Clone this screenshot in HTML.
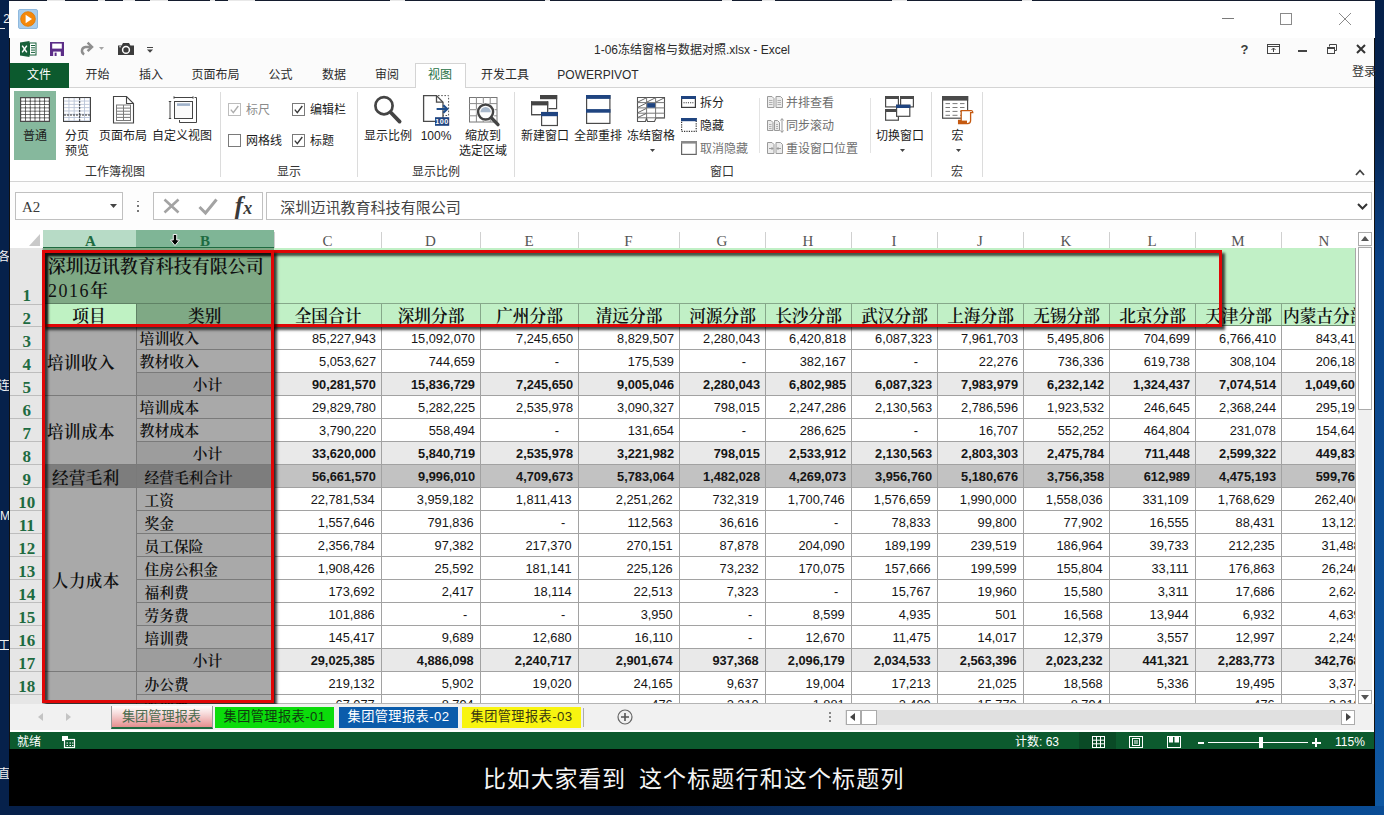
<!DOCTYPE html><html lang="zh-CN"><head><meta charset="utf-8"><title>Excel</title><style>
*{box-sizing:border-box;margin:0;padding:0}
html,body{width:1384px;height:815px;overflow:hidden}
body{position:relative;background:#07224d;font-family:'Liberation Sans','Noto Sans CJK SC',sans-serif;font-size:12px;color:#222;}
.a{position:absolute}
.t{position:absolute;white-space:nowrap;line-height:1}
.c{transform:translateX(-50%)}
svg{position:absolute;overflow:visible}
</style></head><body>
<div class="a" style="left:0;top:0;width:1384px;height:815px;background:linear-gradient(90deg,#06204a 0%,#06204a 45%,#0a4d96 100%)"></div>
<div class="a" style="left:0;top:0;width:10px;height:815px;background:#06214b"></div>
<div class="a" style="left:1374px;top:0;width:10px;height:806px;background:linear-gradient(180deg,#05204a 0px,#06244f 120px,#0b4286 260px,#0d4d93 500px,#0f58a3 806px)"></div>
<div class="a" style="left:9px;top:0;width:1366px;height:1px;background:#141c2e"></div>
<div class="a" style="left:47px;top:0;width:18px;height:1px;background:#e8e8e8"></div>
<div class="a" style="left:98px;top:0;width:7px;height:1px;background:#e8e8e8"></div>
<div class="a" style="left:123px;top:0;width:12px;height:1px;background:#e8e8e8"></div>
<div class="a" style="left:150px;top:0;width:18px;height:1px;background:#e8e8e8"></div>
<div class="a" style="left:210px;top:0;width:5px;height:1px;background:#e8e8e8"></div>
<div class="a" style="left:228px;top:0;width:27px;height:1px;background:#e8e8e8"></div>
<div class="a" style="left:390px;top:0;width:15px;height:1px;background:#e8e8e8"></div>
<div class="a" style="left:545px;top:0;width:5px;height:1px;background:#e8e8e8"></div>
<div class="a" style="left:722px;top:0;width:10px;height:1px;background:#e8e8e8"></div>
<div class="a" style="left:762px;top:0;width:13px;height:1px;background:#e8e8e8"></div>
<div class="a" style="left:892px;top:0;width:15px;height:1px;background:#e8e8e8"></div>
<div class="a" style="left:1022px;top:0;width:10px;height:1px;background:#e8e8e8"></div>
<div class="a" style="left:0;top:0;width:9px;height:815px;overflow:hidden;color:#f2f2f2;font-size:12px">
<div class="t" style="right:-1px;top:12.5px">2</div>
<div class="t" style="right:-1px;top:251px">各</div>
<div class="t" style="right:-1px;top:380px">连</div>
<div class="t" style="right:-1px;top:509.5px">M</div>
<div class="t" style="right:-1px;top:639.5px">工</div>
<div class="t" style="right:-1px;top:767.5px">直</div>
<div class="a" style="left:0;top:28px;width:5px;height:1px;background:#e8e8e8"></div>
</div>
<div class="a" style="left:9px;top:1px;width:1366px;height:805px;background:#fff"></div>
<div class="a" style="left:9px;top:749px;width:1366px;height:57px;background:#000"></div>
<div class="a" style="left:9px;top:38px;width:1366px;height:711px;background:#111"></div>
<div class="a" id="xl" style="left:10px;top:38px;width:1364px;height:711px;background:#fff;overflow:hidden"></div>
<div class="a" style="left:18px;top:9px;width:20px;height:20px;background:#a9cdec;border:1px solid #8fb9de;border-radius:2px"></div>
<svg style="left:20px;top:11px" width="16" height="16" viewBox="0 0 16 16"><circle cx="8" cy="8" r="7.3" fill="#f5880a"/><circle cx="8" cy="8" r="7.3" fill="none" stroke="#e07800" stroke-width="0.8"/><path d="M5.6 3.8 L12 8 L5.6 12.2Z" fill="#fff"/></svg>
<div class="a" style="left:1222px;top:18px;width:12px;height:1px;background:#7a7a7a;"></div>
<div class="a" style="left:1280px;top:13px;width:12px;height:12px;background:transparent;border:1px solid #8a8a8a"></div>
<svg style="left:1339px;top:13px" width="12" height="12" viewBox="0 0 12 12"><path d="M0 0L12 12M12 0L0 12" stroke="#8a8a8a" stroke-width="1" fill="none"/></svg>
<div class="a" style="left:10px;top:38px;width:1364px;height:50px;background:#fbfbfb;"></div>
<svg style="left:20px;top:41px" width="17" height="16" viewBox="0 0 17 16"><path d="M0 1.6 L9.5 0 V16 L0 14.4Z" fill="#17603a"/><rect x="9.5" y="2" width="6.5" height="12" fill="#fff" stroke="#17603a" stroke-width="1"/><path d="M11 4.5h4M11 6.8h4M11 9.1h4M11 11.4h4" stroke="#17603a" stroke-width="1"/><path d="M2.2 4.6 L6.8 11.4 M6.8 4.6 L2.2 11.4" stroke="#fff" stroke-width="1.5"/></svg>
<svg style="left:50px;top:42px" width="14" height="14" viewBox="0 0 14 14"><path d="M0 0H14V14H0Z" fill="#5b2d87"/><rect x="2.2" y="1.6" width="9.6" height="5" fill="#fff"/><rect x="3.2" y="9.6" width="7.6" height="4.4" fill="#fff"/><rect x="4.6" y="10.6" width="2" height="3.4" fill="#5b2d87"/></svg>
<svg style="left:79px;top:42px" width="15" height="13" viewBox="0 0 15 13"><path d="M11.8 4.9 H6.4 A3.9 3.9 0 0 0 5.2 12.3" fill="none" stroke="#8e8e8e" stroke-width="2.5"/><path d="M8.6 0.6 L13 4.9 L8.6 9.2" fill="none" stroke="#8e8e8e" stroke-width="2.5"/></svg>
<svg style="left:99px;top:47px" width="5" height="3" viewBox="0 0 5 3"><path d="M0 0H5L2.5 3Z" fill="#a5a5a5"/></svg>
<svg style="left:118px;top:43px" width="16" height="12" viewBox="0 0 16 12"><path d="M0 2.4 H3.6 L5 0 H11 L12.4 2.4 H16 V12 H0Z" fill="#3c3c3c"/><circle cx="8" cy="6.9" r="3.4" fill="none" stroke="#fff" stroke-width="1.5"/><rect x="1.3" y="3.3" width="1.6" height="1" fill="#fff"/></svg>
<svg style="left:147px;top:47px" width="6" height="6" viewBox="0 0 6 6"><path d="M0 0.5H6" stroke="#444" stroke-width="1"/><path d="M0 2.5H6L3 5.8Z" fill="#444"/></svg>
<div class="t c" style="left:692px;top:43.5px;font-size:12px;color:#2a2a2a;">1-06冻结窗格与数据对照.xlsx - Excel</div>
<div class="t c" style="left:1244.5px;top:43px;font-size:13px;color:#3b3b3b;font-weight:bold;">?</div>
<svg style="left:1267px;top:44px" width="13" height="10" viewBox="0 0 13 10"><rect x="0.5" y="0.5" width="12" height="9" fill="none" stroke="#444" stroke-width="1"/><path d="M0.5 2.5H12.5" stroke="#444"/><path d="M6.5 8V4M4.5 6L6.5 4L8.5 6" stroke="#444" fill="none"/></svg>
<div class="a" style="left:1298px;top:50px;width:9px;height:2px;background:#444;"></div>
<svg style="left:1327px;top:44px" width="10" height="10" viewBox="0 0 10 10"><path d="M2.5 2.5V0.5H9.5V6.5H7.5" fill="none" stroke="#444"/><rect x="0.5" y="3.5" width="7" height="6" fill="none" stroke="#444"/><path d="M0.5 4.5H7.5" stroke="#444"/></svg>
<svg style="left:1356px;top:44px" width="10" height="10" viewBox="0 0 10 10"><path d="M1 1L9 9M9 1L1 9" stroke="#333" stroke-width="2" fill="none"/></svg>
<div class="t" style="left:1352px;top:66px;font-size:12px;color:#333;">登录</div>
<div class="a" style="left:10px;top:87px;width:1364px;height:1px;background:#d4d4d4;"></div>
<div class="a" style="left:10px;top:63px;width:59px;height:25px;background:#0c5a2e;"></div>
<div class="t c" style="left:39px;top:69px;font-size:12px;color:#fff;">文件</div>
<div class="t c" style="left:97.5px;top:69px;font-size:12px;color:#2b2b2b;">开始</div>
<div class="t c" style="left:151px;top:69px;font-size:12px;color:#2b2b2b;">插入</div>
<div class="t c" style="left:215.5px;top:69px;font-size:12px;color:#2b2b2b;">页面布局</div>
<div class="t c" style="left:280.5px;top:69px;font-size:12px;color:#2b2b2b;">公式</div>
<div class="t c" style="left:334px;top:69px;font-size:12px;color:#2b2b2b;">数据</div>
<div class="t c" style="left:387px;top:69px;font-size:12px;color:#2b2b2b;">审阅</div>
<div class="t c" style="left:505px;top:69px;font-size:12px;color:#2b2b2b;">开发工具</div>
<div class="t c" style="left:598px;top:69px;font-size:12px;color:#2b2b2b;">POWERPIVOT</div>
<div class="a" style="left:414.5px;top:63px;width:51px;height:25px;background:#fff;border:1px solid #d4d4d4;border-bottom:none"></div>
<div class="t c" style="left:440px;top:69px;font-size:12px;color:#1e7145;">视图</div>
<div class="a" style="left:10px;top:88px;width:1364px;height:93px;background:#fff;"></div>
<div class="a" style="left:10px;top:181px;width:1364px;height:1px;background:#d4d4d4;"></div>
<div class="a" style="left:10px;top:182px;width:1364px;height:48px;background:#fdfdfd;"></div>
<div class="a" style="left:220px;top:92px;width:1px;height:85px;background:#dcdcdc;"></div>
<div class="a" style="left:357px;top:92px;width:1px;height:85px;background:#dcdcdc;"></div>
<div class="a" style="left:514px;top:92px;width:1px;height:85px;background:#dcdcdc;"></div>
<div class="a" style="left:931px;top:92px;width:1px;height:85px;background:#dcdcdc;"></div>
<div class="a" style="left:982px;top:92px;width:1px;height:85px;background:#dcdcdc;"></div>
<div class="a" style="left:759px;top:98px;width:1px;height:55px;background:#e3e3e3;"></div>
<div class="a" style="left:870px;top:98px;width:1px;height:55px;background:#e3e3e3;"></div>
<div class="t c" style="left:115px;top:166.3px;font-size:12px;color:#333;">工作簿视图</div>
<div class="t c" style="left:289px;top:166.3px;font-size:12px;color:#333;">显示</div>
<div class="t c" style="left:436px;top:166.3px;font-size:12px;color:#333;">显示比例</div>
<div class="t c" style="left:722px;top:166.3px;font-size:12px;color:#333;">窗口</div>
<div class="t c" style="left:957px;top:166.3px;font-size:12px;color:#333;">宏</div>
<div class="a" style="left:14px;top:91px;width:42px;height:69px;background:#86b89d;"></div>
<svg style="left:20px;top:97px" width="30" height="25" viewBox="0 0 30 25"><rect x="0" y="0" width="30" height="25" fill="#4a4a4a"/><rect x="1.15" y="1.15" width="3.95" height="2.55" rx="0.4" fill="#fff"/><rect x="5.90" y="1.15" width="3.95" height="2.55" rx="0.4" fill="#fff"/><rect x="10.65" y="1.15" width="3.95" height="2.55" rx="0.4" fill="#fff"/><rect x="15.40" y="1.15" width="3.95" height="2.55" rx="0.4" fill="#fff"/><rect x="20.15" y="1.15" width="3.95" height="2.55" rx="0.4" fill="#fff"/><rect x="24.90" y="1.15" width="3.95" height="2.55" rx="0.4" fill="#fff"/><rect x="1.15" y="4.51" width="3.95" height="2.55" rx="0.4" fill="#fff"/><rect x="5.90" y="4.51" width="3.95" height="2.55" rx="0.4" fill="#fff"/><rect x="10.65" y="4.51" width="3.95" height="2.55" rx="0.4" fill="#fff"/><rect x="15.40" y="4.51" width="3.95" height="2.55" rx="0.4" fill="#fff"/><rect x="20.15" y="4.51" width="3.95" height="2.55" rx="0.4" fill="#fff"/><rect x="24.90" y="4.51" width="3.95" height="2.55" rx="0.4" fill="#fff"/><rect x="1.15" y="7.87" width="3.95" height="2.55" rx="0.4" fill="#fff"/><rect x="5.90" y="7.87" width="3.95" height="2.55" rx="0.4" fill="#fff"/><rect x="10.65" y="7.87" width="3.95" height="2.55" rx="0.4" fill="#fff"/><rect x="15.40" y="7.87" width="3.95" height="2.55" rx="0.4" fill="#fff"/><rect x="20.15" y="7.87" width="3.95" height="2.55" rx="0.4" fill="#fff"/><rect x="24.90" y="7.87" width="3.95" height="2.55" rx="0.4" fill="#fff"/><rect x="1.15" y="11.23" width="3.95" height="2.55" rx="0.4" fill="#fff"/><rect x="5.90" y="11.23" width="3.95" height="2.55" rx="0.4" fill="#fff"/><rect x="10.65" y="11.23" width="3.95" height="2.55" rx="0.4" fill="#fff"/><rect x="15.40" y="11.23" width="3.95" height="2.55" rx="0.4" fill="#fff"/><rect x="20.15" y="11.23" width="3.95" height="2.55" rx="0.4" fill="#fff"/><rect x="24.90" y="11.23" width="3.95" height="2.55" rx="0.4" fill="#fff"/><rect x="1.15" y="14.59" width="3.95" height="2.55" rx="0.4" fill="#fff"/><rect x="5.90" y="14.59" width="3.95" height="2.55" rx="0.4" fill="#fff"/><rect x="10.65" y="14.59" width="3.95" height="2.55" rx="0.4" fill="#fff"/><rect x="15.40" y="14.59" width="3.95" height="2.55" rx="0.4" fill="#fff"/><rect x="20.15" y="14.59" width="3.95" height="2.55" rx="0.4" fill="#fff"/><rect x="24.90" y="14.59" width="3.95" height="2.55" rx="0.4" fill="#fff"/><rect x="1.15" y="17.95" width="3.95" height="2.55" rx="0.4" fill="#fff"/><rect x="5.90" y="17.95" width="3.95" height="2.55" rx="0.4" fill="#fff"/><rect x="10.65" y="17.95" width="3.95" height="2.55" rx="0.4" fill="#fff"/><rect x="15.40" y="17.95" width="3.95" height="2.55" rx="0.4" fill="#fff"/><rect x="20.15" y="17.95" width="3.95" height="2.55" rx="0.4" fill="#fff"/><rect x="24.90" y="17.95" width="3.95" height="2.55" rx="0.4" fill="#fff"/><rect x="1.15" y="21.31" width="3.95" height="2.55" rx="0.4" fill="#fff"/><rect x="5.90" y="21.31" width="3.95" height="2.55" rx="0.4" fill="#fff"/><rect x="10.65" y="21.31" width="3.95" height="2.55" rx="0.4" fill="#fff"/><rect x="15.40" y="21.31" width="3.95" height="2.55" rx="0.4" fill="#fff"/><rect x="20.15" y="21.31" width="3.95" height="2.55" rx="0.4" fill="#fff"/><rect x="24.90" y="21.31" width="3.95" height="2.55" rx="0.4" fill="#fff"/></svg>
<div class="t c" style="left:35px;top:130px;font-size:12px;color:#1c1c1c;">普通</div>
<svg style="left:63px;top:97px" width="28" height="25" viewBox="0 0 28 25"><rect x="0" y="0" width="28" height="25" fill="#444"/><rect x="1" y="1" width="26" height="23" fill="#b9c3d6"/><rect x="1.20" y="1.20" width="4.3" height="2.4" fill="#fff"/><rect x="6.40" y="1.20" width="4.3" height="2.4" fill="#fff"/><rect x="11.60" y="1.20" width="4.3" height="2.4" fill="#fff"/><rect x="16.80" y="1.20" width="4.3" height="2.4" fill="#fff"/><rect x="22.00" y="1.20" width="4.3" height="2.4" fill="#fff"/><rect x="1.20" y="4.50" width="4.3" height="2.4" fill="#fff"/><rect x="6.40" y="4.50" width="4.3" height="2.4" fill="#fff"/><rect x="11.60" y="4.50" width="4.3" height="2.4" fill="#fff"/><rect x="16.80" y="4.50" width="4.3" height="2.4" fill="#fff"/><rect x="22.00" y="4.50" width="4.3" height="2.4" fill="#fff"/><rect x="1.20" y="7.80" width="4.3" height="2.4" fill="#fff"/><rect x="6.40" y="7.80" width="4.3" height="2.4" fill="#fff"/><rect x="11.60" y="7.80" width="4.3" height="2.4" fill="#fff"/><rect x="16.80" y="7.80" width="4.3" height="2.4" fill="#fff"/><rect x="22.00" y="7.80" width="4.3" height="2.4" fill="#fff"/><rect x="1.20" y="11.10" width="4.3" height="2.4" fill="#fff"/><rect x="6.40" y="11.10" width="4.3" height="2.4" fill="#fff"/><rect x="11.60" y="11.10" width="4.3" height="2.4" fill="#fff"/><rect x="16.80" y="11.10" width="4.3" height="2.4" fill="#fff"/><rect x="22.00" y="11.10" width="4.3" height="2.4" fill="#fff"/><rect x="1.20" y="14.40" width="4.3" height="2.4" fill="#fff"/><rect x="6.40" y="14.40" width="4.3" height="2.4" fill="#fff"/><rect x="11.60" y="14.40" width="4.3" height="2.4" fill="#fff"/><rect x="16.80" y="14.40" width="4.3" height="2.4" fill="#fff"/><rect x="22.00" y="14.40" width="4.3" height="2.4" fill="#fff"/><rect x="1.20" y="17.70" width="4.3" height="2.4" fill="#fff"/><rect x="6.40" y="17.70" width="4.3" height="2.4" fill="#fff"/><rect x="11.60" y="17.70" width="4.3" height="2.4" fill="#fff"/><rect x="16.80" y="17.70" width="4.3" height="2.4" fill="#fff"/><rect x="22.00" y="17.70" width="4.3" height="2.4" fill="#fff"/><rect x="1.20" y="21.00" width="4.3" height="2.4" fill="#fff"/><rect x="6.40" y="21.00" width="4.3" height="2.4" fill="#fff"/><rect x="11.60" y="21.00" width="4.3" height="2.4" fill="#fff"/><rect x="16.80" y="21.00" width="4.3" height="2.4" fill="#fff"/><rect x="22.00" y="21.00" width="4.3" height="2.4" fill="#fff"/><path d="M16.7 1V24" stroke="#333" stroke-width="1" stroke-dasharray="2 1"/><path d="M1 18H27" stroke="#333" stroke-width="1" stroke-dasharray="2 1"/></svg>
<div class="t c" style="left:77px;top:130px;font-size:12px;color:#1c1c1c;">分页</div>
<div class="t c" style="left:77px;top:145px;font-size:12px;color:#1c1c1c;">预览</div>
<svg style="left:113px;top:96px" width="21" height="28" viewBox="0 0 21 28"><path d="M0.5 0.5H13.5L20.5 7.5V27H0.5Z" fill="#fff" stroke="#444" stroke-width="1.1"/><path d="M13.5 0.5V7.5H20.5" fill="none" stroke="#444" stroke-width="1.1"/><rect x="3.5" y="9" width="14" height="15.5" fill="#fff" stroke="#7a7a7a"/><path d="M3.5 12.1H17.5M3.5 15.2H17.5M3.5 18.3H17.5M3.5 21.4H17.5M10.5 9V24.5" stroke="#7a7a7a"/></svg>
<div class="t c" style="left:123px;top:130px;font-size:12px;color:#1c1c1c;">页面布局</div>
<svg style="left:168px;top:95px" width="29" height="28" viewBox="0 0 29 28"><path d="M2 6.5V23.5M0.8 6.5H3.2M0.8 23.5H3.2" stroke="#444" fill="none"/><path d="M6 2.5H25M6 1.3V3.7M25 1.3V3.7" stroke="#444" fill="none"/><path d="M26.5 2.5H28.5V27.5H11.5V25" stroke="#444" fill="none"/><rect x="6.5" y="6.5" width="18" height="17" fill="#fbfbfb" stroke="#444"/><rect x="9" y="8.3" width="13" height="2.6" fill="#9fb1c9"/></svg>
<div class="t c" style="left:182px;top:130px;font-size:12px;color:#1c1c1c;">自定义视图</div>
<div class="a" style="left:228px;top:103px;width:13px;height:13px;background:#fff;border:1px solid #bdbdbd"></div>
<svg style="left:228px;top:103px" width="13" height="13" viewBox="0 0 13 13"><path d="M2.8 6.6L5.3 9.6L10.3 3" fill="none" stroke="#adadad" stroke-width="1.4"/></svg>
<div class="t" style="left:246px;top:104px;font-size:12px;color:#8a8a8a;">标尺</div>
<div class="a" style="left:292px;top:103px;width:13px;height:13px;background:#fff;border:1px solid #7a7a7a"></div>
<svg style="left:292px;top:103px" width="13" height="13" viewBox="0 0 13 13"><path d="M2.8 6.6L5.3 9.6L10.3 3" fill="none" stroke="#3a3a3a" stroke-width="1.4"/></svg>
<div class="t" style="left:310px;top:104px;font-size:12px;color:#1c1c1c;">编辑栏</div>
<div class="a" style="left:228px;top:134px;width:13px;height:13px;background:#fff;border:1px solid #7a7a7a"></div>
<div class="t" style="left:246px;top:134.5px;font-size:12px;color:#1c1c1c;">网格线</div>
<div class="a" style="left:292px;top:134px;width:13px;height:13px;background:#fff;border:1px solid #7a7a7a"></div>
<svg style="left:292px;top:134px" width="13" height="13" viewBox="0 0 13 13"><path d="M2.8 6.6L5.3 9.6L10.3 3" fill="none" stroke="#3a3a3a" stroke-width="1.4"/></svg>
<div class="t" style="left:310px;top:134.5px;font-size:12px;color:#1c1c1c;">标题</div>
<svg style="left:374px;top:96px" width="28" height="28" viewBox="0 0 28 28"><circle cx="10" cy="9.7" r="8.6" fill="none" stroke="#444" stroke-width="2.7"/><path d="M16.6 16.3L25.6 25.6" stroke="#444" stroke-width="3.8" stroke-linecap="round"/></svg>
<div class="t c" style="left:388px;top:130px;font-size:12px;color:#1c1c1c;">显示比例</div>
<svg style="left:423px;top:95px" width="27" height="31" viewBox="0 0 27 31"><path d="M0.6 0.6H13.5L20 7.2V26.4H0.6Z" fill="#fff" stroke="#4a4a4a" stroke-width="1.3"/><path d="M13.5 0.6V7.2H20" fill="none" stroke="#4a4a4a" stroke-width="1.3"/><path d="M15 0.6H25.6V20.5H20" fill="none" stroke="#555" stroke-dasharray="1.6 1.6"/><path d="M13.6 14H24M20.3 10.2L24.2 14L20.3 17.8" fill="none" stroke="#1f4e8c" stroke-width="2.2"/><rect x="12" y="22.2" width="14.2" height="8.6" fill="#1f4480"/><text x="19.1" y="29.3" font-size="7.2" font-weight="bold" fill="#fff" text-anchor="middle" letter-spacing="0.5" font-family="Liberation Sans,sans-serif">100</text></svg>
<div class="t c" style="left:436px;top:130px;font-size:12px;color:#1c1c1c;">100%</div>
<svg style="left:469px;top:97px" width="30" height="28" viewBox="0 0 30 28"><rect x="0.5" y="0.5" width="27.5" height="24.5" fill="#fff" stroke="#777"/><path d="M0 6.6H28" stroke="#8a8a8a"/><path d="M0 12.7H28" stroke="#8a8a8a"/><path d="M0 18.8H28" stroke="#8a8a8a"/><path d="M7.4 0V25" stroke="#8a8a8a"/><path d="M14.3 0V25" stroke="#8a8a8a"/><path d="M21.2 0V25" stroke="#8a8a8a"/><circle cx="16.6" cy="15" r="9.3" fill="#fff"/><circle cx="16.6" cy="15" r="7.5" fill="#fdfdfd" stroke="#444" stroke-width="2.4"/><path d="M11.4 15.3A5.2 5.2 0 0 1 21.8 15.3Z" fill="#a9b9cc"/><path d="M22.3 20.8L29 27.6" stroke="#444" stroke-width="3.4" stroke-linecap="round"/></svg>
<div class="t c" style="left:483px;top:130px;font-size:12px;color:#1c1c1c;">缩放到</div>
<div class="t c" style="left:483px;top:145px;font-size:12px;color:#1c1c1c;">选定区域</div>
<svg style="left:531px;top:95px" width="27" height="31" viewBox="0 0 27 31"><path d="M9.5 0.5H25.6V13.6H17.5" fill="#fff" stroke="#4a4a4a" stroke-width="1.2"/><rect x="9" y="0" width="17.2" height="4.2" fill="#444"/><path d="M0.6 6.5V19.6H9.5M16.6 6.5V16" fill="none" stroke="#4a4a4a" stroke-width="1.2"/><rect x="0.6" y="6.5" width="16" height="13" fill="#fff" stroke="none"/><path d="M0.6 6.5V19.6H10M16.6 6.5V17" fill="none" stroke="#4a4a4a" stroke-width="1.2"/><rect x="0" y="6.2" width="17.2" height="4.2" fill="#444"/><rect x="10.6" y="17.5" width="15.8" height="13" fill="#fff" stroke="#4a4a4a" stroke-width="1.2"/><rect x="10" y="17" width="17" height="4.2" fill="#1f4480"/></svg>
<div class="t c" style="left:545px;top:130px;font-size:12px;color:#1c1c1c;">新建窗口</div>
<svg style="left:586px;top:95px" width="25" height="29" viewBox="0 0 25 29"><rect x="0.6" y="0.6" width="23.3" height="27.8" fill="#fff" stroke="#4a4a4a" stroke-width="1.2"/><rect x="0" y="0" width="24.5" height="3.9" fill="#1f4480"/><rect x="0" y="14.1" width="24.5" height="3.6" fill="#1f4480"/></svg>
<div class="t c" style="left:598px;top:130px;font-size:12px;color:#1c1c1c;">全部重排</div>
<svg style="left:637px;top:96.5px" width="28" height="25" viewBox="0 0 28 25"><path d="M0.5 0.5H27.5V21H19L17.5 24.5H10.5L9.5 21 8.5 24.5H0.5Z" fill="#fff" stroke="#555" stroke-width="1.1"/><path d="M0.5 5.6H27.5" stroke="#777"/><path d="M0.5 10.9H27.5" stroke="#777"/><path d="M0.5 16.2H27.5" stroke="#777"/><path d="M0.5 20.8H27.5" stroke="#777"/><path d="M9.6 0.5V21M18.6 0.5V21" stroke="#777"/><path d="M1 5L9 1M1 10.3L9 6.3M1 15.6L9 11.6M1 20.4L9 16.6M10 5L18 1M19 5L27 1" stroke="#555" stroke-width="0.9"/><rect x="10.1" y="6.1" width="8" height="4.5" fill="#1f4480"/></svg>
<div class="t c" style="left:651px;top:130px;font-size:12px;color:#1c1c1c;">冻结窗格</div>
<svg style="left:649.5px;top:149.3px" width="5" height="3" viewBox="0 0 5 3"><path d="M0 0H5L2.5 3Z" fill="#444"/></svg>
<svg style="left:681px;top:96px" width="15" height="12" viewBox="0 0 15 12"><rect x="0.6" y="0.6" width="13.8" height="10.8" fill="#fff" stroke="#3c3c3c" stroke-width="1.2"/><rect x="0" y="0" width="15" height="3" fill="#1f4480"/><path d="M2.5 6.8H12.5" stroke="#333" stroke-width="1.1" stroke-dasharray="1.1 1.1"/></svg>
<div class="t" style="left:700px;top:96.5px;font-size:12px;color:#1c1c1c;">拆分</div>
<svg style="left:681px;top:118px" width="16" height="14" viewBox="0 0 16 14"><rect x="0.6" y="0.6" width="14.6" height="12.8" fill="#fff" stroke="#333" stroke-width="1.2" stroke-dasharray="1.2 1.2"/><rect x="0" y="0" width="15.8" height="3.2" fill="#1f4480"/></svg>
<div class="t" style="left:700px;top:119.5px;font-size:12px;color:#1c1c1c;">隐藏</div>
<svg style="left:681px;top:141px" width="16" height="14" viewBox="0 0 16 14"><rect x="0.6" y="0.6" width="14.6" height="12.8" fill="#fff" stroke="#666" stroke-width="1.2"/><rect x="0" y="0" width="15.8" height="2.6" fill="#8a8a8a"/></svg>
<div class="t" style="left:700px;top:142.5px;font-size:12px;color:#727272;">取消隐藏</div>
<svg style="left:767px;top:96px" width="16" height="12" viewBox="0 0 16 12"><path d="M0.5 0.5H5L7 2.5V11.5H0.5Z M9 0.5H13.5L15.5 2.5V11.5H9Z" fill="#ececec" stroke="#9a9a9a"/><path d="M2 4.5H5.5M2 6.5H5.5M2 8.5H5.5M10.5 4.5H14M10.5 6.5H14M10.5 8.5H14" stroke="#b0b0b0"/></svg>
<div class="t" style="left:786px;top:96.5px;font-size:12px;color:#6e6e6e;">并排查看</div>
<svg style="left:767px;top:118px" width="17" height="15" viewBox="0 0 17 15"><path d="M0.5 2.5H4L6 4.5V12.5H0.5Z M7.5 2.5H10.5L12.5 4.5V12.5H7.5Z" fill="#ececec" stroke="#9a9a9a"/><path d="M2 6.5H4.5M2 8.5H4.5M2 10.5H4.5M9 6.5H11M9 8.5H11M9 10.5H11" stroke="#b0b0b0"/><path d="M15 1V14M13.5 2.5L15 0.5L16.5 2.5M13.5 12.5L15 14.5L16.5 12.5" fill="none" stroke="#9a9a9a"/></svg>
<div class="t" style="left:786px;top:119.5px;font-size:12px;color:#6e6e6e;">同步滚动</div>
<svg style="left:767px;top:142px" width="16" height="12" viewBox="0 0 16 12"><path d="M0.5 0.5H5L7 2.5V11.5H0.5Z M9 0.5H13.5L15.5 2.5V11.5H9Z" fill="#ececec" stroke="#9a9a9a"/><path d="M2 6.5H6M4.5 5L6 6.5L4.5 8M14 6.5H10M11.5 5L10 6.5L11.5 8" stroke="#9a9a9a" fill="none"/></svg>
<div class="t" style="left:786px;top:142.5px;font-size:12px;color:#6e6e6e;">重设窗口位置</div>
<svg style="left:885px;top:96px" width="30" height="26" viewBox="0 0 30 26"><rect x="0.6" y="0.6" width="12.8" height="10.3" fill="#fff" stroke="#4a4a4a" stroke-width="1.2"/><rect x="0" y="0" width="14" height="3" fill="#4a4a4a"/><rect x="15.6" y="0.6" width="12.8" height="10.3" fill="#fff" stroke="#4a4a4a" stroke-width="1.2"/><rect x="15" y="0" width="14" height="3" fill="#4a4a4a"/><rect x="0.6" y="13.6" width="12.8" height="10.6" fill="#fff" stroke="#4a4a4a" stroke-width="1.2"/><rect x="0" y="13" width="14" height="3" fill="#4a4a4a"/><rect x="11.6" y="9.3" width="13.2" height="11" fill="#fff" stroke="#4a4a4a" stroke-width="1.2"/><rect x="11" y="8.7" width="14.4" height="3.3" fill="#1f4480"/></svg>
<div class="t c" style="left:900px;top:130px;font-size:12px;color:#1c1c1c;">切换窗口</div>
<svg style="left:900.2px;top:149px" width="5" height="3" viewBox="0 0 5 3"><path d="M0 0H5L2.5 3Z" fill="#444"/></svg>
<svg style="left:942px;top:96px" width="32" height="29" viewBox="0 0 32 29"><rect x="0.6" y="0.6" width="25" height="21.6" fill="#fff" stroke="#4a4a4a" stroke-width="1.2"/><rect x="0" y="0" width="26.2" height="4.6" fill="#4a4a4a"/><path d="M3.5 7.6H8M10.5 7.6H15.5M18 7.6H22.5" stroke="#7a7a7a" stroke-width="1"/><path d="M3.5 11.5H8M10.5 11.5H15.5M18 11.5H22.5" stroke="#7a7a7a" stroke-width="1"/><path d="M3.5 15.4H8M10.5 15.4H15.5M18 15.4H22.5" stroke="#7a7a7a" stroke-width="1"/><path d="M3.5 19.3H8M10.5 19.3H15.5M18 19.3H22.5" stroke="#7a7a7a" stroke-width="1"/><path d="M19.2 14.6H29.4Q30.8 14.6 30.8 16.6H28.6V24.6Q28.6 27.6 25.6 27.6H16.6V24.4H19.2Z" fill="#fff" stroke="#c55a11" stroke-width="1.3"/><path d="M16.6 26H25" stroke="#c55a11" stroke-width="2.8"/></svg>
<div class="t c" style="left:957.5px;top:130px;font-size:12px;color:#1c1c1c;">宏</div>
<svg style="left:956px;top:149px" width="5" height="3" viewBox="0 0 5 3"><path d="M0 0H5L2.5 3Z" fill="#444"/></svg>
<svg style="left:1355px;top:169px" width="10" height="7" viewBox="0 0 10 7"><path d="M1 6L5 1.5L9 6" fill="none" stroke="#444" stroke-width="1.8"/></svg>
<div class="a" style="left:15px;top:192px;width:108px;height:28px;background:#fff;border:1px solid #c0c0c0"></div>
<div class="t" style="left:22px;top:199.5px;font-size:15px;color:#3a3a3a;font-family:'Liberation Serif','Noto Serif CJK SC',serif;">A2</div>
<svg style="left:110px;top:203.5px" width="7" height="4" viewBox="0 0 7 4"><path d="M0 0H7L3.5 4Z" fill="#444"/></svg>
<div class="a" style="left:137px;top:200.5px;width:1.7px;height:1.7px;background:#777;"></div>
<div class="a" style="left:137px;top:205.3px;width:1.7px;height:1.7px;background:#777;"></div>
<div class="a" style="left:137px;top:210px;width:1.7px;height:1.7px;background:#777;"></div>
<div class="a" style="left:153px;top:192px;width:110px;height:28px;background:#fff;border:1px solid #c0c0c0"></div>
<svg style="left:163px;top:198px" width="17" height="16" viewBox="0 0 17 16"><path d="M1.5 1.5L15.5 14.5M15.5 1.5L1.5 14.5" stroke="#a3a3a3" stroke-width="2.6" fill="none"/></svg>
<svg style="left:198px;top:198px" width="20" height="17" viewBox="0 0 20 17"><path d="M1.5 9L7.5 15L18.5 1.5" stroke="#a3a3a3" stroke-width="3" fill="none"/></svg>
<div class="t c" style="left:243.5px;top:192.5px;font-size:25px;color:#3a3a3a;font-family:'Liberation Serif','Noto Serif CJK SC',serif;font-weight:bold;"><i>f</i><i style="font-size:18px">x</i></div>
<div class="a" style="left:266px;top:192px;width:1106px;height:28px;background:#fff;border:1px solid #c0c0c0"></div>
<div class="t" style="left:280.3px;top:199.775px;font-size:15.05px;color:#444;">深圳迈讯教育科技有限公司</div>
<svg style="left:1357px;top:203px" width="11" height="7" viewBox="0 0 11 7"><path d="M1 1L5.5 5.5L10 1" fill="none" stroke="#333" stroke-width="2"/></svg>
<div class="a" id="grid" style="left:10px;top:230px;width:1346px;height:474px;overflow:hidden;background:#fff">
<div class="a" style="left:0px;top:0px;width:1346px;height:18px;background:#fff;"></div>
<div class="a" style="left:33px;top:0px;width:93px;height:18px;background:#b7dbc6;"></div>
<div class="a" style="left:126px;top:0px;width:138px;height:18px;background:#7fb596;"></div>
<div class="a" style="left:33px;top:17px;width:231px;height:2px;background:#1e6b41;"></div>
<div class="t" style="top:3.8px;font-size:15px;color:#1e6b41;left:80.3px;transform:translateX(-50%);font-family:'Liberation Serif','Noto Serif CJK SC',serif;font-weight:bold;">A</div>
<div class="t" style="top:3.8px;font-size:15px;color:#1e6b41;left:195px;transform:translateX(-50%);font-family:'Liberation Serif','Noto Serif CJK SC',serif;font-weight:bold;">B</div>
<div class="t" style="top:3.5px;font-size:15px;color:#555;left:317.5px;transform:translateX(-50%);font-family:'Liberation Serif','Noto Serif CJK SC',serif;">C</div>
<div class="a" style="left:264px;top:2px;width:1px;height:16px;background:#d0d0d0;"></div>
<div class="t" style="top:3.5px;font-size:15px;color:#555;left:420.5px;transform:translateX(-50%);font-family:'Liberation Serif','Noto Serif CJK SC',serif;">D</div>
<div class="a" style="left:371px;top:2px;width:1px;height:16px;background:#d0d0d0;"></div>
<div class="t" style="top:3.5px;font-size:15px;color:#555;left:519px;transform:translateX(-50%);font-family:'Liberation Serif','Noto Serif CJK SC',serif;">E</div>
<div class="a" style="left:470px;top:2px;width:1px;height:16px;background:#d0d0d0;"></div>
<div class="t" style="top:3.5px;font-size:15px;color:#555;left:618.5px;transform:translateX(-50%);font-family:'Liberation Serif','Noto Serif CJK SC',serif;">F</div>
<div class="a" style="left:568px;top:2px;width:1px;height:16px;background:#d0d0d0;"></div>
<div class="t" style="top:3.5px;font-size:15px;color:#555;left:712px;transform:translateX(-50%);font-family:'Liberation Serif','Noto Serif CJK SC',serif;">G</div>
<div class="a" style="left:669px;top:2px;width:1px;height:16px;background:#d0d0d0;"></div>
<div class="t" style="top:3.5px;font-size:15px;color:#555;left:798px;transform:translateX(-50%);font-family:'Liberation Serif','Noto Serif CJK SC',serif;">H</div>
<div class="a" style="left:755px;top:2px;width:1px;height:16px;background:#d0d0d0;"></div>
<div class="t" style="top:3.5px;font-size:15px;color:#555;left:884px;transform:translateX(-50%);font-family:'Liberation Serif','Noto Serif CJK SC',serif;">I</div>
<div class="a" style="left:841px;top:2px;width:1px;height:16px;background:#d0d0d0;"></div>
<div class="t" style="top:3.5px;font-size:15px;color:#555;left:970px;transform:translateX(-50%);font-family:'Liberation Serif','Noto Serif CJK SC',serif;">J</div>
<div class="a" style="left:927px;top:2px;width:1px;height:16px;background:#d0d0d0;"></div>
<div class="t" style="top:3.5px;font-size:15px;color:#555;left:1056px;transform:translateX(-50%);font-family:'Liberation Serif','Noto Serif CJK SC',serif;">K</div>
<div class="a" style="left:1013px;top:2px;width:1px;height:16px;background:#d0d0d0;"></div>
<div class="t" style="top:3.5px;font-size:15px;color:#555;left:1142px;transform:translateX(-50%);font-family:'Liberation Serif','Noto Serif CJK SC',serif;">L</div>
<div class="a" style="left:1099px;top:2px;width:1px;height:16px;background:#d0d0d0;"></div>
<div class="t" style="top:3.5px;font-size:15px;color:#555;left:1228px;transform:translateX(-50%);font-family:'Liberation Serif','Noto Serif CJK SC',serif;">M</div>
<div class="a" style="left:1185px;top:2px;width:1px;height:16px;background:#d0d0d0;"></div>
<div class="t" style="top:3.5px;font-size:15px;color:#555;left:1314px;transform:translateX(-50%);font-family:'Liberation Serif','Noto Serif CJK SC',serif;">N</div>
<div class="a" style="left:1271px;top:2px;width:1px;height:16px;background:#d0d0d0;"></div>
<svg style="left:19px;top:4px" width="11" height="12" viewBox="0 0 11 12"><path d="M11 0V12H0Z" fill="#c9c9c9"/></svg>
<svg style="left:159.5px;top:4px" width="10" height="12" viewBox="0 0 10 12"><path d="M3.3 0.5H6.7V6H9.5L5 11.5L0.5 6H3.3Z" fill="#000" stroke="#fff" stroke-width="0.9"/></svg>
<div class="a" style="left:0px;top:18px;width:33px;height:460px;background:#e6e6e6;"></div>
<div class="a" style="left:32px;top:18px;width:1px;height:460px;background:#c4c4c4;"></div>
<div class="a" style="left:0px;top:74px;width:33px;height:1px;background:#bdbdbd;"></div>
<div class="t" style="top:56.5px;font-size:17px;color:#1e6b41;left:16.7px;transform:translateX(-50%);font-family:'Liberation Serif','Noto Serif CJK SC',serif;font-weight:bold;">1</div>
<div class="a" style="left:0px;top:96px;width:33px;height:1px;background:#bdbdbd;"></div>
<div class="t" style="top:80px;font-size:17px;color:#1e6b41;left:16.7px;transform:translateX(-50%);font-family:'Liberation Serif','Noto Serif CJK SC',serif;font-weight:bold;">2</div>
<div class="a" style="left:0px;top:119px;width:33px;height:1px;background:#bdbdbd;"></div>
<div class="t" style="top:103px;font-size:17px;color:#1e6b41;left:16.7px;transform:translateX(-50%);font-family:'Liberation Serif','Noto Serif CJK SC',serif;font-weight:bold;">3</div>
<div class="a" style="left:0px;top:142px;width:33px;height:1px;background:#bdbdbd;"></div>
<div class="t" style="top:126px;font-size:17px;color:#1e6b41;left:16.7px;transform:translateX(-50%);font-family:'Liberation Serif','Noto Serif CJK SC',serif;font-weight:bold;">4</div>
<div class="a" style="left:0px;top:165px;width:33px;height:1px;background:#bdbdbd;"></div>
<div class="t" style="top:149px;font-size:17px;color:#1e6b41;left:16.7px;transform:translateX(-50%);font-family:'Liberation Serif','Noto Serif CJK SC',serif;font-weight:bold;">5</div>
<div class="a" style="left:0px;top:188px;width:33px;height:1px;background:#bdbdbd;"></div>
<div class="t" style="top:172px;font-size:17px;color:#1e6b41;left:16.7px;transform:translateX(-50%);font-family:'Liberation Serif','Noto Serif CJK SC',serif;font-weight:bold;">6</div>
<div class="a" style="left:0px;top:211px;width:33px;height:1px;background:#bdbdbd;"></div>
<div class="t" style="top:195px;font-size:17px;color:#1e6b41;left:16.7px;transform:translateX(-50%);font-family:'Liberation Serif','Noto Serif CJK SC',serif;font-weight:bold;">7</div>
<div class="a" style="left:0px;top:234px;width:33px;height:1px;background:#bdbdbd;"></div>
<div class="t" style="top:218px;font-size:17px;color:#1e6b41;left:16.7px;transform:translateX(-50%);font-family:'Liberation Serif','Noto Serif CJK SC',serif;font-weight:bold;">8</div>
<div class="a" style="left:0px;top:257px;width:33px;height:1px;background:#bdbdbd;"></div>
<div class="t" style="top:241px;font-size:17px;color:#1e6b41;left:16.7px;transform:translateX(-50%);font-family:'Liberation Serif','Noto Serif CJK SC',serif;font-weight:bold;">9</div>
<div class="a" style="left:0px;top:280px;width:33px;height:1px;background:#bdbdbd;"></div>
<div class="t" style="top:264px;font-size:17px;color:#1e6b41;left:16.7px;transform:translateX(-50%);font-family:'Liberation Serif','Noto Serif CJK SC',serif;font-weight:bold;">10</div>
<div class="a" style="left:0px;top:303px;width:33px;height:1px;background:#bdbdbd;"></div>
<div class="t" style="top:287px;font-size:17px;color:#1e6b41;left:16.7px;transform:translateX(-50%);font-family:'Liberation Serif','Noto Serif CJK SC',serif;font-weight:bold;">11</div>
<div class="a" style="left:0px;top:326px;width:33px;height:1px;background:#bdbdbd;"></div>
<div class="t" style="top:310px;font-size:17px;color:#1e6b41;left:16.7px;transform:translateX(-50%);font-family:'Liberation Serif','Noto Serif CJK SC',serif;font-weight:bold;">12</div>
<div class="a" style="left:0px;top:349px;width:33px;height:1px;background:#bdbdbd;"></div>
<div class="t" style="top:333px;font-size:17px;color:#1e6b41;left:16.7px;transform:translateX(-50%);font-family:'Liberation Serif','Noto Serif CJK SC',serif;font-weight:bold;">13</div>
<div class="a" style="left:0px;top:372px;width:33px;height:1px;background:#bdbdbd;"></div>
<div class="t" style="top:356px;font-size:17px;color:#1e6b41;left:16.7px;transform:translateX(-50%);font-family:'Liberation Serif','Noto Serif CJK SC',serif;font-weight:bold;">14</div>
<div class="a" style="left:0px;top:395px;width:33px;height:1px;background:#bdbdbd;"></div>
<div class="t" style="top:379px;font-size:17px;color:#1e6b41;left:16.7px;transform:translateX(-50%);font-family:'Liberation Serif','Noto Serif CJK SC',serif;font-weight:bold;">15</div>
<div class="a" style="left:0px;top:418px;width:33px;height:1px;background:#bdbdbd;"></div>
<div class="t" style="top:402px;font-size:17px;color:#1e6b41;left:16.7px;transform:translateX(-50%);font-family:'Liberation Serif','Noto Serif CJK SC',serif;font-weight:bold;">16</div>
<div class="a" style="left:0px;top:441px;width:33px;height:1px;background:#bdbdbd;"></div>
<div class="t" style="top:425px;font-size:17px;color:#1e6b41;left:16.7px;transform:translateX(-50%);font-family:'Liberation Serif','Noto Serif CJK SC',serif;font-weight:bold;">17</div>
<div class="a" style="left:0px;top:464px;width:33px;height:1px;background:#bdbdbd;"></div>
<div class="t" style="top:448px;font-size:17px;color:#1e6b41;left:16.7px;transform:translateX(-50%);font-family:'Liberation Serif','Noto Serif CJK SC',serif;font-weight:bold;">18</div>
<div class="a" style="left:0px;top:487px;width:33px;height:1px;background:#bdbdbd;"></div>
<div class="t" style="top:471px;font-size:17px;color:#1e6b41;left:16.7px;transform:translateX(-50%);font-family:'Liberation Serif','Noto Serif CJK SC',serif;font-weight:bold;">19</div>
<div class="a" style="left:33px;top:18px;width:1313px;height:78px;background:#c1f0c6;"></div>
<div class="a" style="left:33px;top:18px;width:231px;height:56px;background:#7fa985;"></div>
<div class="a" style="left:126px;top:74px;width:138px;height:22px;background:#7fa985;"></div>
<div class="a" style="left:33px;top:74px;width:93px;height:22px;background:#bff2c3;"></div>
<div class="a" style="left:33px;top:96px;width:231px;height:400px;background:#a9a9a9;"></div>
<div class="a" style="left:264px;top:143px;width:1082px;height:23px;background:#e9e9e9;"></div>
<div class="a" style="left:126px;top:143px;width:138px;height:23px;background:#9d9d9d;"></div>
<div class="a" style="left:264px;top:212px;width:1082px;height:23px;background:#e9e9e9;"></div>
<div class="a" style="left:126px;top:212px;width:138px;height:23px;background:#9d9d9d;"></div>
<div class="a" style="left:264px;top:419px;width:1082px;height:23px;background:#e9e9e9;"></div>
<div class="a" style="left:126px;top:419px;width:138px;height:23px;background:#9d9d9d;"></div>
<div class="a" style="left:264px;top:235px;width:1082px;height:23px;background:#c2c2c2;"></div>
<div class="a" style="left:33px;top:235px;width:231px;height:23px;background:#7d7d7d;"></div>
<div class="a" style="left:264px;top:73px;width:1082px;height:1px;background:#86a88a;"></div>
<div class="a" style="left:33px;top:73px;width:231px;height:1px;background:#5f8265;"></div>
<div class="a" style="left:264px;top:74px;width:1px;height:22px;background:#86a88a;"></div>
<div class="a" style="left:371px;top:74px;width:1px;height:22px;background:#86a88a;"></div>
<div class="a" style="left:470px;top:74px;width:1px;height:22px;background:#86a88a;"></div>
<div class="a" style="left:568px;top:74px;width:1px;height:22px;background:#86a88a;"></div>
<div class="a" style="left:669px;top:74px;width:1px;height:22px;background:#86a88a;"></div>
<div class="a" style="left:755px;top:74px;width:1px;height:22px;background:#86a88a;"></div>
<div class="a" style="left:841px;top:74px;width:1px;height:22px;background:#86a88a;"></div>
<div class="a" style="left:927px;top:74px;width:1px;height:22px;background:#86a88a;"></div>
<div class="a" style="left:1013px;top:74px;width:1px;height:22px;background:#86a88a;"></div>
<div class="a" style="left:1099px;top:74px;width:1px;height:22px;background:#86a88a;"></div>
<div class="a" style="left:1185px;top:74px;width:1px;height:22px;background:#86a88a;"></div>
<div class="a" style="left:1271px;top:74px;width:1px;height:22px;background:#86a88a;"></div>
<div class="a" style="left:126px;top:74px;width:1px;height:22px;background:#5f8265;"></div>
<div class="a" style="left:264px;top:96px;width:1px;height:400px;background:#a2a2a2;"></div>
<div class="a" style="left:371px;top:96px;width:1px;height:400px;background:#a2a2a2;"></div>
<div class="a" style="left:470px;top:96px;width:1px;height:400px;background:#a2a2a2;"></div>
<div class="a" style="left:568px;top:96px;width:1px;height:400px;background:#a2a2a2;"></div>
<div class="a" style="left:669px;top:96px;width:1px;height:400px;background:#a2a2a2;"></div>
<div class="a" style="left:755px;top:96px;width:1px;height:400px;background:#a2a2a2;"></div>
<div class="a" style="left:841px;top:96px;width:1px;height:400px;background:#a2a2a2;"></div>
<div class="a" style="left:927px;top:96px;width:1px;height:400px;background:#a2a2a2;"></div>
<div class="a" style="left:1013px;top:96px;width:1px;height:400px;background:#a2a2a2;"></div>
<div class="a" style="left:1099px;top:96px;width:1px;height:400px;background:#a2a2a2;"></div>
<div class="a" style="left:1185px;top:96px;width:1px;height:400px;background:#a2a2a2;"></div>
<div class="a" style="left:1271px;top:96px;width:1px;height:400px;background:#a2a2a2;"></div>
<div class="a" style="left:126px;top:96px;width:1px;height:400px;background:#7a7a7a;"></div>
<div class="a" style="left:264px;top:119px;width:1082px;height:1px;background:#a2a2a2;"></div>
<div class="a" style="left:126px;top:119px;width:138px;height:1px;background:#7a7a7a;"></div>
<div class="a" style="left:264px;top:142px;width:1082px;height:1px;background:#a2a2a2;"></div>
<div class="a" style="left:126px;top:142px;width:138px;height:1px;background:#7a7a7a;"></div>
<div class="a" style="left:264px;top:165px;width:1082px;height:1px;background:#a2a2a2;"></div>
<div class="a" style="left:126px;top:165px;width:138px;height:1px;background:#7a7a7a;"></div>
<div class="a" style="left:264px;top:188px;width:1082px;height:1px;background:#a2a2a2;"></div>
<div class="a" style="left:126px;top:188px;width:138px;height:1px;background:#7a7a7a;"></div>
<div class="a" style="left:264px;top:211px;width:1082px;height:1px;background:#a2a2a2;"></div>
<div class="a" style="left:126px;top:211px;width:138px;height:1px;background:#7a7a7a;"></div>
<div class="a" style="left:264px;top:234px;width:1082px;height:1px;background:#a2a2a2;"></div>
<div class="a" style="left:126px;top:234px;width:138px;height:1px;background:#7a7a7a;"></div>
<div class="a" style="left:264px;top:257px;width:1082px;height:1px;background:#a2a2a2;"></div>
<div class="a" style="left:126px;top:257px;width:138px;height:1px;background:#7a7a7a;"></div>
<div class="a" style="left:264px;top:280px;width:1082px;height:1px;background:#a2a2a2;"></div>
<div class="a" style="left:126px;top:280px;width:138px;height:1px;background:#7a7a7a;"></div>
<div class="a" style="left:264px;top:303px;width:1082px;height:1px;background:#a2a2a2;"></div>
<div class="a" style="left:126px;top:303px;width:138px;height:1px;background:#7a7a7a;"></div>
<div class="a" style="left:264px;top:326px;width:1082px;height:1px;background:#a2a2a2;"></div>
<div class="a" style="left:126px;top:326px;width:138px;height:1px;background:#7a7a7a;"></div>
<div class="a" style="left:264px;top:349px;width:1082px;height:1px;background:#a2a2a2;"></div>
<div class="a" style="left:126px;top:349px;width:138px;height:1px;background:#7a7a7a;"></div>
<div class="a" style="left:264px;top:372px;width:1082px;height:1px;background:#a2a2a2;"></div>
<div class="a" style="left:126px;top:372px;width:138px;height:1px;background:#7a7a7a;"></div>
<div class="a" style="left:264px;top:395px;width:1082px;height:1px;background:#a2a2a2;"></div>
<div class="a" style="left:126px;top:395px;width:138px;height:1px;background:#7a7a7a;"></div>
<div class="a" style="left:264px;top:418px;width:1082px;height:1px;background:#a2a2a2;"></div>
<div class="a" style="left:126px;top:418px;width:138px;height:1px;background:#7a7a7a;"></div>
<div class="a" style="left:264px;top:441px;width:1082px;height:1px;background:#a2a2a2;"></div>
<div class="a" style="left:126px;top:441px;width:138px;height:1px;background:#7a7a7a;"></div>
<div class="a" style="left:264px;top:464px;width:1082px;height:1px;background:#a2a2a2;"></div>
<div class="a" style="left:126px;top:464px;width:138px;height:1px;background:#7a7a7a;"></div>
<div class="a" style="left:264px;top:487px;width:1082px;height:1px;background:#a2a2a2;"></div>
<div class="a" style="left:126px;top:487px;width:138px;height:1px;background:#7a7a7a;"></div>
<div class="a" style="left:33px;top:165px;width:93px;height:1px;background:#7a7a7a;"></div>
<div class="a" style="left:33px;top:234px;width:93px;height:1px;background:#7a7a7a;"></div>
<div class="a" style="left:33px;top:257px;width:93px;height:1px;background:#7a7a7a;"></div>
<div class="a" style="left:33px;top:441px;width:93px;height:1px;background:#7a7a7a;"></div>
<div class="a" style="left:33px;top:95px;width:1313px;height:1px;background:#6f8f73;"></div>
<div class="t" style="top:27.5px;font-size:18px;color:#111;left:37.7px;font-family:'Liberation Serif','Noto Serif CJK SC',serif;font-weight:600;">深圳迈讯教育科技有限公司</div>
<div class="t" style="top:52.3px;font-size:18px;color:#111;left:38px;font-family:'Liberation Serif','Noto Serif CJK SC',serif;font-weight:600;"><span style="letter-spacing:1.5px;font-weight:normal">2016</span>年</div>
<div class="t" style="top:79.15px;font-size:16.7px;color:#111;left:79px;transform:translateX(-50%);font-family:'Liberation Serif','Noto Serif CJK SC',serif;font-weight:600;">项目</div>
<div class="t" style="top:79.15px;font-size:16.7px;color:#111;left:194.7px;transform:translateX(-50%);font-family:'Liberation Serif','Noto Serif CJK SC',serif;font-weight:600;">类别</div>
<div class="t" style="top:79.15px;font-size:16.7px;color:#111;left:318px;transform:translateX(-50%);font-family:'Liberation Serif','Noto Serif CJK SC',serif;font-weight:600;">全国合计</div>
<div class="t" style="top:79.15px;font-size:16.7px;color:#111;left:421px;transform:translateX(-50%);font-family:'Liberation Serif','Noto Serif CJK SC',serif;font-weight:600;">深圳分部</div>
<div class="t" style="top:79.15px;font-size:16.7px;color:#111;left:519.5px;transform:translateX(-50%);font-family:'Liberation Serif','Noto Serif CJK SC',serif;font-weight:600;">广州分部</div>
<div class="t" style="top:79.15px;font-size:16.7px;color:#111;left:619px;transform:translateX(-50%);font-family:'Liberation Serif','Noto Serif CJK SC',serif;font-weight:600;">清远分部</div>
<div class="t" style="top:79.15px;font-size:16.7px;color:#111;left:712.5px;transform:translateX(-50%);font-family:'Liberation Serif','Noto Serif CJK SC',serif;font-weight:600;">河源分部</div>
<div class="t" style="top:79.15px;font-size:16.7px;color:#111;left:798.5px;transform:translateX(-50%);font-family:'Liberation Serif','Noto Serif CJK SC',serif;font-weight:600;">长沙分部</div>
<div class="t" style="top:79.15px;font-size:16.7px;color:#111;left:884.5px;transform:translateX(-50%);font-family:'Liberation Serif','Noto Serif CJK SC',serif;font-weight:600;">武汉分部</div>
<div class="t" style="top:79.15px;font-size:16.7px;color:#111;left:970.5px;transform:translateX(-50%);font-family:'Liberation Serif','Noto Serif CJK SC',serif;font-weight:600;">上海分部</div>
<div class="t" style="top:79.15px;font-size:16.7px;color:#111;left:1056.5px;transform:translateX(-50%);font-family:'Liberation Serif','Noto Serif CJK SC',serif;font-weight:600;">无锡分部</div>
<div class="t" style="top:79.15px;font-size:16.7px;color:#111;left:1142.5px;transform:translateX(-50%);font-family:'Liberation Serif','Noto Serif CJK SC',serif;font-weight:600;">北京分部</div>
<div class="t" style="top:79.15px;font-size:16.7px;color:#111;left:1228.5px;transform:translateX(-50%);font-family:'Liberation Serif','Noto Serif CJK SC',serif;font-weight:600;">天津分部</div>
<div class="t" style="top:79.15px;font-size:16.7px;color:#111;left:1273px;font-family:'Liberation Serif','Noto Serif CJK SC',serif;font-weight:600;">内蒙古分部</div>
<div class="t" style="top:125.95px;font-size:16.5px;color:#111;left:37px;font-family:'Liberation Serif','Noto Serif CJK SC',serif;font-weight:600;letter-spacing:0.5px;">培训收入</div>
<div class="t" style="top:194.95px;font-size:16.5px;color:#111;left:37px;font-family:'Liberation Serif','Noto Serif CJK SC',serif;font-weight:600;letter-spacing:0.5px;">培训成本</div>
<div class="t" style="top:240.75px;font-size:16.5px;color:#111;left:42px;font-family:'Liberation Serif','Noto Serif CJK SC',serif;font-weight:600;letter-spacing:0.4px;">经营毛利</div>
<div class="t" style="top:344.05px;font-size:16.5px;color:#111;left:42px;font-family:'Liberation Serif','Noto Serif CJK SC',serif;font-weight:600;letter-spacing:0.4px;">人力成本</div>
<div class="t" style="top:102.45px;font-size:14.9px;color:#111;left:129.5px;font-family:'Liberation Serif','Noto Serif CJK SC',serif;font-weight:600;">培训收入</div>
<div class="t" style="top:125.45px;font-size:14.9px;color:#111;left:129.5px;font-family:'Liberation Serif','Noto Serif CJK SC',serif;font-weight:600;">教材收入</div>
<div class="t" style="top:148.45px;font-size:14.9px;color:#111;left:197.4px;transform:translateX(-50%);font-family:'Liberation Serif','Noto Serif CJK SC',serif;font-weight:600;">小计</div>
<div class="t" style="top:171.45px;font-size:14.9px;color:#111;left:129.5px;font-family:'Liberation Serif','Noto Serif CJK SC',serif;font-weight:600;">培训成本</div>
<div class="t" style="top:194.45px;font-size:14.9px;color:#111;left:129.5px;font-family:'Liberation Serif','Noto Serif CJK SC',serif;font-weight:600;">教材成本</div>
<div class="t" style="top:217.45px;font-size:14.9px;color:#111;left:197.4px;transform:translateX(-50%);font-family:'Liberation Serif','Noto Serif CJK SC',serif;font-weight:600;">小计</div>
<div class="t" style="top:240.55px;font-size:14.7px;color:#111;left:134.5px;font-family:'Liberation Serif','Noto Serif CJK SC',serif;font-weight:600;">经营毛利合计</div>
<div class="t" style="top:263.55px;font-size:14.7px;color:#111;left:134.5px;font-family:'Liberation Serif','Noto Serif CJK SC',serif;font-weight:600;">工资</div>
<div class="t" style="top:286.55px;font-size:14.7px;color:#111;left:134.5px;font-family:'Liberation Serif','Noto Serif CJK SC',serif;font-weight:600;">奖金</div>
<div class="t" style="top:309.55px;font-size:14.7px;color:#111;left:134.5px;font-family:'Liberation Serif','Noto Serif CJK SC',serif;font-weight:600;">员工保险</div>
<div class="t" style="top:332.55px;font-size:14.7px;color:#111;left:134.5px;font-family:'Liberation Serif','Noto Serif CJK SC',serif;font-weight:600;">住房公积金</div>
<div class="t" style="top:355.55px;font-size:14.7px;color:#111;left:134.5px;font-family:'Liberation Serif','Noto Serif CJK SC',serif;font-weight:600;">福利费</div>
<div class="t" style="top:378.55px;font-size:14.7px;color:#111;left:134.5px;font-family:'Liberation Serif','Noto Serif CJK SC',serif;font-weight:600;">劳务费</div>
<div class="t" style="top:401.55px;font-size:14.7px;color:#111;left:134.5px;font-family:'Liberation Serif','Noto Serif CJK SC',serif;font-weight:600;">培训费</div>
<div class="t" style="top:424.45px;font-size:14.9px;color:#111;left:197.4px;transform:translateX(-50%);font-family:'Liberation Serif','Noto Serif CJK SC',serif;font-weight:600;">小计</div>
<div class="t" style="top:447.55px;font-size:14.7px;color:#111;left:134.5px;font-family:'Liberation Serif','Noto Serif CJK SC',serif;font-weight:600;">办公费</div>
<div class="t" style="top:470.55px;font-size:14.7px;color:#111;left:134.5px;font-family:'Liberation Serif','Noto Serif CJK SC',serif;font-weight:600;">管理费</div>
<div class="t" style="top:102.6px;font-size:12.8px;color:#151515;right:980px;font-family:'Liberation Sans',sans-serif;">85,227,943</div>
<div class="t" style="top:102.6px;font-size:12.8px;color:#151515;right:881px;font-family:'Liberation Sans',sans-serif;">15,092,070</div>
<div class="t" style="top:102.6px;font-size:12.8px;color:#151515;right:783px;font-family:'Liberation Sans',sans-serif;">7,245,650</div>
<div class="t" style="top:102.6px;font-size:12.8px;color:#151515;right:682px;font-family:'Liberation Sans',sans-serif;">8,829,507</div>
<div class="t" style="top:102.6px;font-size:12.8px;color:#151515;right:596px;font-family:'Liberation Sans',sans-serif;">2,280,043</div>
<div class="t" style="top:102.6px;font-size:12.8px;color:#151515;right:510px;font-family:'Liberation Sans',sans-serif;">6,420,818</div>
<div class="t" style="top:102.6px;font-size:12.8px;color:#151515;right:424px;font-family:'Liberation Sans',sans-serif;">6,087,323</div>
<div class="t" style="top:102.6px;font-size:12.8px;color:#151515;right:338px;font-family:'Liberation Sans',sans-serif;">7,961,703</div>
<div class="t" style="top:102.6px;font-size:12.8px;color:#151515;right:252px;font-family:'Liberation Sans',sans-serif;">5,495,806</div>
<div class="t" style="top:102.6px;font-size:12.8px;color:#151515;right:166px;font-family:'Liberation Sans',sans-serif;">704,699</div>
<div class="t" style="top:102.6px;font-size:12.8px;color:#151515;right:80px;font-family:'Liberation Sans',sans-serif;">6,766,410</div>
<div class="t" style="top:102.6px;font-size:12.8px;color:#151515;right:-6px;font-family:'Liberation Sans',sans-serif;">843,417</div>
<div class="t" style="top:125.6px;font-size:12.8px;color:#151515;right:980px;font-family:'Liberation Sans',sans-serif;">5,053,627</div>
<div class="t" style="top:125.6px;font-size:12.8px;color:#151515;right:881px;font-family:'Liberation Sans',sans-serif;">744,659</div>
<div class="t" style="top:125.6px;font-size:12.8px;color:#151515;right:797px;font-family:'Liberation Sans',sans-serif;">-</div>
<div class="t" style="top:125.6px;font-size:12.8px;color:#151515;right:682px;font-family:'Liberation Sans',sans-serif;">175,539</div>
<div class="t" style="top:125.6px;font-size:12.8px;color:#151515;right:610px;font-family:'Liberation Sans',sans-serif;">-</div>
<div class="t" style="top:125.6px;font-size:12.8px;color:#151515;right:510px;font-family:'Liberation Sans',sans-serif;">382,167</div>
<div class="t" style="top:125.6px;font-size:12.8px;color:#151515;right:438px;font-family:'Liberation Sans',sans-serif;">-</div>
<div class="t" style="top:125.6px;font-size:12.8px;color:#151515;right:338px;font-family:'Liberation Sans',sans-serif;">22,276</div>
<div class="t" style="top:125.6px;font-size:12.8px;color:#151515;right:252px;font-family:'Liberation Sans',sans-serif;">736,336</div>
<div class="t" style="top:125.6px;font-size:12.8px;color:#151515;right:166px;font-family:'Liberation Sans',sans-serif;">619,738</div>
<div class="t" style="top:125.6px;font-size:12.8px;color:#151515;right:80px;font-family:'Liberation Sans',sans-serif;">308,104</div>
<div class="t" style="top:125.6px;font-size:12.8px;color:#151515;right:-6px;font-family:'Liberation Sans',sans-serif;">206,185</div>
<div class="t" style="top:148.6px;font-size:12.8px;color:#151515;right:980px;font-family:'Liberation Sans',sans-serif;font-weight:bold;">90,281,570</div>
<div class="t" style="top:148.6px;font-size:12.8px;color:#151515;right:881px;font-family:'Liberation Sans',sans-serif;font-weight:bold;">15,836,729</div>
<div class="t" style="top:148.6px;font-size:12.8px;color:#151515;right:783px;font-family:'Liberation Sans',sans-serif;font-weight:bold;">7,245,650</div>
<div class="t" style="top:148.6px;font-size:12.8px;color:#151515;right:682px;font-family:'Liberation Sans',sans-serif;font-weight:bold;">9,005,046</div>
<div class="t" style="top:148.6px;font-size:12.8px;color:#151515;right:596px;font-family:'Liberation Sans',sans-serif;font-weight:bold;">2,280,043</div>
<div class="t" style="top:148.6px;font-size:12.8px;color:#151515;right:510px;font-family:'Liberation Sans',sans-serif;font-weight:bold;">6,802,985</div>
<div class="t" style="top:148.6px;font-size:12.8px;color:#151515;right:424px;font-family:'Liberation Sans',sans-serif;font-weight:bold;">6,087,323</div>
<div class="t" style="top:148.6px;font-size:12.8px;color:#151515;right:338px;font-family:'Liberation Sans',sans-serif;font-weight:bold;">7,983,979</div>
<div class="t" style="top:148.6px;font-size:12.8px;color:#151515;right:252px;font-family:'Liberation Sans',sans-serif;font-weight:bold;">6,232,142</div>
<div class="t" style="top:148.6px;font-size:12.8px;color:#151515;right:166px;font-family:'Liberation Sans',sans-serif;font-weight:bold;">1,324,437</div>
<div class="t" style="top:148.6px;font-size:12.8px;color:#151515;right:80px;font-family:'Liberation Sans',sans-serif;font-weight:bold;">7,074,514</div>
<div class="t" style="top:148.6px;font-size:12.8px;color:#151515;right:-6px;font-family:'Liberation Sans',sans-serif;font-weight:bold;">1,049,602</div>
<div class="t" style="top:171.6px;font-size:12.8px;color:#151515;right:980px;font-family:'Liberation Sans',sans-serif;">29,829,780</div>
<div class="t" style="top:171.6px;font-size:12.8px;color:#151515;right:881px;font-family:'Liberation Sans',sans-serif;">5,282,225</div>
<div class="t" style="top:171.6px;font-size:12.8px;color:#151515;right:783px;font-family:'Liberation Sans',sans-serif;">2,535,978</div>
<div class="t" style="top:171.6px;font-size:12.8px;color:#151515;right:682px;font-family:'Liberation Sans',sans-serif;">3,090,327</div>
<div class="t" style="top:171.6px;font-size:12.8px;color:#151515;right:596px;font-family:'Liberation Sans',sans-serif;">798,015</div>
<div class="t" style="top:171.6px;font-size:12.8px;color:#151515;right:510px;font-family:'Liberation Sans',sans-serif;">2,247,286</div>
<div class="t" style="top:171.6px;font-size:12.8px;color:#151515;right:424px;font-family:'Liberation Sans',sans-serif;">2,130,563</div>
<div class="t" style="top:171.6px;font-size:12.8px;color:#151515;right:338px;font-family:'Liberation Sans',sans-serif;">2,786,596</div>
<div class="t" style="top:171.6px;font-size:12.8px;color:#151515;right:252px;font-family:'Liberation Sans',sans-serif;">1,923,532</div>
<div class="t" style="top:171.6px;font-size:12.8px;color:#151515;right:166px;font-family:'Liberation Sans',sans-serif;">246,645</div>
<div class="t" style="top:171.6px;font-size:12.8px;color:#151515;right:80px;font-family:'Liberation Sans',sans-serif;">2,368,244</div>
<div class="t" style="top:171.6px;font-size:12.8px;color:#151515;right:-6px;font-family:'Liberation Sans',sans-serif;">295,195</div>
<div class="t" style="top:194.6px;font-size:12.8px;color:#151515;right:980px;font-family:'Liberation Sans',sans-serif;">3,790,220</div>
<div class="t" style="top:194.6px;font-size:12.8px;color:#151515;right:881px;font-family:'Liberation Sans',sans-serif;">558,494</div>
<div class="t" style="top:194.6px;font-size:12.8px;color:#151515;right:797px;font-family:'Liberation Sans',sans-serif;">-</div>
<div class="t" style="top:194.6px;font-size:12.8px;color:#151515;right:682px;font-family:'Liberation Sans',sans-serif;">131,654</div>
<div class="t" style="top:194.6px;font-size:12.8px;color:#151515;right:610px;font-family:'Liberation Sans',sans-serif;">-</div>
<div class="t" style="top:194.6px;font-size:12.8px;color:#151515;right:510px;font-family:'Liberation Sans',sans-serif;">286,625</div>
<div class="t" style="top:194.6px;font-size:12.8px;color:#151515;right:438px;font-family:'Liberation Sans',sans-serif;">-</div>
<div class="t" style="top:194.6px;font-size:12.8px;color:#151515;right:338px;font-family:'Liberation Sans',sans-serif;">16,707</div>
<div class="t" style="top:194.6px;font-size:12.8px;color:#151515;right:252px;font-family:'Liberation Sans',sans-serif;">552,252</div>
<div class="t" style="top:194.6px;font-size:12.8px;color:#151515;right:166px;font-family:'Liberation Sans',sans-serif;">464,804</div>
<div class="t" style="top:194.6px;font-size:12.8px;color:#151515;right:80px;font-family:'Liberation Sans',sans-serif;">231,078</div>
<div class="t" style="top:194.6px;font-size:12.8px;color:#151515;right:-6px;font-family:'Liberation Sans',sans-serif;">154,646</div>
<div class="t" style="top:217.6px;font-size:12.8px;color:#151515;right:980px;font-family:'Liberation Sans',sans-serif;font-weight:bold;">33,620,000</div>
<div class="t" style="top:217.6px;font-size:12.8px;color:#151515;right:881px;font-family:'Liberation Sans',sans-serif;font-weight:bold;">5,840,719</div>
<div class="t" style="top:217.6px;font-size:12.8px;color:#151515;right:783px;font-family:'Liberation Sans',sans-serif;font-weight:bold;">2,535,978</div>
<div class="t" style="top:217.6px;font-size:12.8px;color:#151515;right:682px;font-family:'Liberation Sans',sans-serif;font-weight:bold;">3,221,982</div>
<div class="t" style="top:217.6px;font-size:12.8px;color:#151515;right:596px;font-family:'Liberation Sans',sans-serif;font-weight:bold;">798,015</div>
<div class="t" style="top:217.6px;font-size:12.8px;color:#151515;right:510px;font-family:'Liberation Sans',sans-serif;font-weight:bold;">2,533,912</div>
<div class="t" style="top:217.6px;font-size:12.8px;color:#151515;right:424px;font-family:'Liberation Sans',sans-serif;font-weight:bold;">2,130,563</div>
<div class="t" style="top:217.6px;font-size:12.8px;color:#151515;right:338px;font-family:'Liberation Sans',sans-serif;font-weight:bold;">2,803,303</div>
<div class="t" style="top:217.6px;font-size:12.8px;color:#151515;right:252px;font-family:'Liberation Sans',sans-serif;font-weight:bold;">2,475,784</div>
<div class="t" style="top:217.6px;font-size:12.8px;color:#151515;right:166px;font-family:'Liberation Sans',sans-serif;font-weight:bold;">711,448</div>
<div class="t" style="top:217.6px;font-size:12.8px;color:#151515;right:80px;font-family:'Liberation Sans',sans-serif;font-weight:bold;">2,599,322</div>
<div class="t" style="top:217.6px;font-size:12.8px;color:#151515;right:-6px;font-family:'Liberation Sans',sans-serif;font-weight:bold;">449,839</div>
<div class="t" style="top:240.6px;font-size:12.8px;color:#151515;right:980px;font-family:'Liberation Sans',sans-serif;font-weight:bold;">56,661,570</div>
<div class="t" style="top:240.6px;font-size:12.8px;color:#151515;right:881px;font-family:'Liberation Sans',sans-serif;font-weight:bold;">9,996,010</div>
<div class="t" style="top:240.6px;font-size:12.8px;color:#151515;right:783px;font-family:'Liberation Sans',sans-serif;font-weight:bold;">4,709,673</div>
<div class="t" style="top:240.6px;font-size:12.8px;color:#151515;right:682px;font-family:'Liberation Sans',sans-serif;font-weight:bold;">5,783,064</div>
<div class="t" style="top:240.6px;font-size:12.8px;color:#151515;right:596px;font-family:'Liberation Sans',sans-serif;font-weight:bold;">1,482,028</div>
<div class="t" style="top:240.6px;font-size:12.8px;color:#151515;right:510px;font-family:'Liberation Sans',sans-serif;font-weight:bold;">4,269,073</div>
<div class="t" style="top:240.6px;font-size:12.8px;color:#151515;right:424px;font-family:'Liberation Sans',sans-serif;font-weight:bold;">3,956,760</div>
<div class="t" style="top:240.6px;font-size:12.8px;color:#151515;right:338px;font-family:'Liberation Sans',sans-serif;font-weight:bold;">5,180,676</div>
<div class="t" style="top:240.6px;font-size:12.8px;color:#151515;right:252px;font-family:'Liberation Sans',sans-serif;font-weight:bold;">3,756,358</div>
<div class="t" style="top:240.6px;font-size:12.8px;color:#151515;right:166px;font-family:'Liberation Sans',sans-serif;font-weight:bold;">612,989</div>
<div class="t" style="top:240.6px;font-size:12.8px;color:#151515;right:80px;font-family:'Liberation Sans',sans-serif;font-weight:bold;">4,475,193</div>
<div class="t" style="top:240.6px;font-size:12.8px;color:#151515;right:-6px;font-family:'Liberation Sans',sans-serif;font-weight:bold;">599,763</div>
<div class="t" style="top:263.6px;font-size:12.8px;color:#151515;right:981.3px;font-family:'Liberation Sans',sans-serif;">22,781,534</div>
<div class="t" style="top:263.6px;font-size:12.8px;color:#151515;right:882.3px;font-family:'Liberation Sans',sans-serif;">3,959,182</div>
<div class="t" style="top:263.6px;font-size:12.8px;color:#151515;right:784.3px;font-family:'Liberation Sans',sans-serif;">1,811,413</div>
<div class="t" style="top:263.6px;font-size:12.8px;color:#151515;right:683.3px;font-family:'Liberation Sans',sans-serif;">2,251,262</div>
<div class="t" style="top:263.6px;font-size:12.8px;color:#151515;right:597.3px;font-family:'Liberation Sans',sans-serif;">732,319</div>
<div class="t" style="top:263.6px;font-size:12.8px;color:#151515;right:511.3px;font-family:'Liberation Sans',sans-serif;">1,700,746</div>
<div class="t" style="top:263.6px;font-size:12.8px;color:#151515;right:425.3px;font-family:'Liberation Sans',sans-serif;">1,576,659</div>
<div class="t" style="top:263.6px;font-size:12.8px;color:#151515;right:339.3px;font-family:'Liberation Sans',sans-serif;">1,990,000</div>
<div class="t" style="top:263.6px;font-size:12.8px;color:#151515;right:253.3px;font-family:'Liberation Sans',sans-serif;">1,558,036</div>
<div class="t" style="top:263.6px;font-size:12.8px;color:#151515;right:167.3px;font-family:'Liberation Sans',sans-serif;">331,109</div>
<div class="t" style="top:263.6px;font-size:12.8px;color:#151515;right:81.3px;font-family:'Liberation Sans',sans-serif;">1,768,629</div>
<div class="t" style="top:263.6px;font-size:12.8px;color:#151515;right:-4.7px;font-family:'Liberation Sans',sans-serif;">262,400</div>
<div class="t" style="top:286.6px;font-size:12.8px;color:#151515;right:981.3px;font-family:'Liberation Sans',sans-serif;">1,557,646</div>
<div class="t" style="top:286.6px;font-size:12.8px;color:#151515;right:882.3px;font-family:'Liberation Sans',sans-serif;">791,836</div>
<div class="t" style="top:286.6px;font-size:12.8px;color:#151515;right:790.8px;font-family:'Liberation Sans',sans-serif;">-</div>
<div class="t" style="top:286.6px;font-size:12.8px;color:#151515;right:683.3px;font-family:'Liberation Sans',sans-serif;">112,563</div>
<div class="t" style="top:286.6px;font-size:12.8px;color:#151515;right:597.3px;font-family:'Liberation Sans',sans-serif;">36,616</div>
<div class="t" style="top:286.6px;font-size:12.8px;color:#151515;right:517.8px;font-family:'Liberation Sans',sans-serif;">-</div>
<div class="t" style="top:286.6px;font-size:12.8px;color:#151515;right:425.3px;font-family:'Liberation Sans',sans-serif;">78,833</div>
<div class="t" style="top:286.6px;font-size:12.8px;color:#151515;right:339.3px;font-family:'Liberation Sans',sans-serif;">99,800</div>
<div class="t" style="top:286.6px;font-size:12.8px;color:#151515;right:253.3px;font-family:'Liberation Sans',sans-serif;">77,902</div>
<div class="t" style="top:286.6px;font-size:12.8px;color:#151515;right:167.3px;font-family:'Liberation Sans',sans-serif;">16,555</div>
<div class="t" style="top:286.6px;font-size:12.8px;color:#151515;right:81.3px;font-family:'Liberation Sans',sans-serif;">88,431</div>
<div class="t" style="top:286.6px;font-size:12.8px;color:#151515;right:-4.7px;font-family:'Liberation Sans',sans-serif;">13,122</div>
<div class="t" style="top:309.6px;font-size:12.8px;color:#151515;right:981.3px;font-family:'Liberation Sans',sans-serif;">2,356,784</div>
<div class="t" style="top:309.6px;font-size:12.8px;color:#151515;right:882.3px;font-family:'Liberation Sans',sans-serif;">97,382</div>
<div class="t" style="top:309.6px;font-size:12.8px;color:#151515;right:784.3px;font-family:'Liberation Sans',sans-serif;">217,370</div>
<div class="t" style="top:309.6px;font-size:12.8px;color:#151515;right:683.3px;font-family:'Liberation Sans',sans-serif;">270,151</div>
<div class="t" style="top:309.6px;font-size:12.8px;color:#151515;right:597.3px;font-family:'Liberation Sans',sans-serif;">87,878</div>
<div class="t" style="top:309.6px;font-size:12.8px;color:#151515;right:511.3px;font-family:'Liberation Sans',sans-serif;">204,090</div>
<div class="t" style="top:309.6px;font-size:12.8px;color:#151515;right:425.3px;font-family:'Liberation Sans',sans-serif;">189,199</div>
<div class="t" style="top:309.6px;font-size:12.8px;color:#151515;right:339.3px;font-family:'Liberation Sans',sans-serif;">239,519</div>
<div class="t" style="top:309.6px;font-size:12.8px;color:#151515;right:253.3px;font-family:'Liberation Sans',sans-serif;">186,964</div>
<div class="t" style="top:309.6px;font-size:12.8px;color:#151515;right:167.3px;font-family:'Liberation Sans',sans-serif;">39,733</div>
<div class="t" style="top:309.6px;font-size:12.8px;color:#151515;right:81.3px;font-family:'Liberation Sans',sans-serif;">212,235</div>
<div class="t" style="top:309.6px;font-size:12.8px;color:#151515;right:-4.7px;font-family:'Liberation Sans',sans-serif;">31,488</div>
<div class="t" style="top:332.6px;font-size:12.8px;color:#151515;right:981.3px;font-family:'Liberation Sans',sans-serif;">1,908,426</div>
<div class="t" style="top:332.6px;font-size:12.8px;color:#151515;right:882.3px;font-family:'Liberation Sans',sans-serif;">25,592</div>
<div class="t" style="top:332.6px;font-size:12.8px;color:#151515;right:784.3px;font-family:'Liberation Sans',sans-serif;">181,141</div>
<div class="t" style="top:332.6px;font-size:12.8px;color:#151515;right:683.3px;font-family:'Liberation Sans',sans-serif;">225,126</div>
<div class="t" style="top:332.6px;font-size:12.8px;color:#151515;right:597.3px;font-family:'Liberation Sans',sans-serif;">73,232</div>
<div class="t" style="top:332.6px;font-size:12.8px;color:#151515;right:511.3px;font-family:'Liberation Sans',sans-serif;">170,075</div>
<div class="t" style="top:332.6px;font-size:12.8px;color:#151515;right:425.3px;font-family:'Liberation Sans',sans-serif;">157,666</div>
<div class="t" style="top:332.6px;font-size:12.8px;color:#151515;right:339.3px;font-family:'Liberation Sans',sans-serif;">199,599</div>
<div class="t" style="top:332.6px;font-size:12.8px;color:#151515;right:253.3px;font-family:'Liberation Sans',sans-serif;">155,804</div>
<div class="t" style="top:332.6px;font-size:12.8px;color:#151515;right:167.3px;font-family:'Liberation Sans',sans-serif;">33,111</div>
<div class="t" style="top:332.6px;font-size:12.8px;color:#151515;right:81.3px;font-family:'Liberation Sans',sans-serif;">176,863</div>
<div class="t" style="top:332.6px;font-size:12.8px;color:#151515;right:-4.7px;font-family:'Liberation Sans',sans-serif;">26,240</div>
<div class="t" style="top:355.6px;font-size:12.8px;color:#151515;right:981.3px;font-family:'Liberation Sans',sans-serif;">173,692</div>
<div class="t" style="top:355.6px;font-size:12.8px;color:#151515;right:882.3px;font-family:'Liberation Sans',sans-serif;">2,417</div>
<div class="t" style="top:355.6px;font-size:12.8px;color:#151515;right:784.3px;font-family:'Liberation Sans',sans-serif;">18,114</div>
<div class="t" style="top:355.6px;font-size:12.8px;color:#151515;right:683.3px;font-family:'Liberation Sans',sans-serif;">22,513</div>
<div class="t" style="top:355.6px;font-size:12.8px;color:#151515;right:597.3px;font-family:'Liberation Sans',sans-serif;">7,323</div>
<div class="t" style="top:355.6px;font-size:12.8px;color:#151515;right:517.8px;font-family:'Liberation Sans',sans-serif;">-</div>
<div class="t" style="top:355.6px;font-size:12.8px;color:#151515;right:425.3px;font-family:'Liberation Sans',sans-serif;">15,767</div>
<div class="t" style="top:355.6px;font-size:12.8px;color:#151515;right:339.3px;font-family:'Liberation Sans',sans-serif;">19,960</div>
<div class="t" style="top:355.6px;font-size:12.8px;color:#151515;right:253.3px;font-family:'Liberation Sans',sans-serif;">15,580</div>
<div class="t" style="top:355.6px;font-size:12.8px;color:#151515;right:167.3px;font-family:'Liberation Sans',sans-serif;">3,311</div>
<div class="t" style="top:355.6px;font-size:12.8px;color:#151515;right:81.3px;font-family:'Liberation Sans',sans-serif;">17,686</div>
<div class="t" style="top:355.6px;font-size:12.8px;color:#151515;right:-4.7px;font-family:'Liberation Sans',sans-serif;">2,624</div>
<div class="t" style="top:378.6px;font-size:12.8px;color:#151515;right:981.3px;font-family:'Liberation Sans',sans-serif;">101,886</div>
<div class="t" style="top:378.6px;font-size:12.8px;color:#151515;right:888.8px;font-family:'Liberation Sans',sans-serif;">-</div>
<div class="t" style="top:378.6px;font-size:12.8px;color:#151515;right:790.8px;font-family:'Liberation Sans',sans-serif;">-</div>
<div class="t" style="top:378.6px;font-size:12.8px;color:#151515;right:683.3px;font-family:'Liberation Sans',sans-serif;">3,950</div>
<div class="t" style="top:378.6px;font-size:12.8px;color:#151515;right:603.8px;font-family:'Liberation Sans',sans-serif;">-</div>
<div class="t" style="top:378.6px;font-size:12.8px;color:#151515;right:511.3px;font-family:'Liberation Sans',sans-serif;">8,599</div>
<div class="t" style="top:378.6px;font-size:12.8px;color:#151515;right:425.3px;font-family:'Liberation Sans',sans-serif;">4,935</div>
<div class="t" style="top:378.6px;font-size:12.8px;color:#151515;right:339.3px;font-family:'Liberation Sans',sans-serif;">501</div>
<div class="t" style="top:378.6px;font-size:12.8px;color:#151515;right:253.3px;font-family:'Liberation Sans',sans-serif;">16,568</div>
<div class="t" style="top:378.6px;font-size:12.8px;color:#151515;right:167.3px;font-family:'Liberation Sans',sans-serif;">13,944</div>
<div class="t" style="top:378.6px;font-size:12.8px;color:#151515;right:81.3px;font-family:'Liberation Sans',sans-serif;">6,932</div>
<div class="t" style="top:378.6px;font-size:12.8px;color:#151515;right:-4.7px;font-family:'Liberation Sans',sans-serif;">4,639</div>
<div class="t" style="top:401.6px;font-size:12.8px;color:#151515;right:981.3px;font-family:'Liberation Sans',sans-serif;">145,417</div>
<div class="t" style="top:401.6px;font-size:12.8px;color:#151515;right:882.3px;font-family:'Liberation Sans',sans-serif;">9,689</div>
<div class="t" style="top:401.6px;font-size:12.8px;color:#151515;right:784.3px;font-family:'Liberation Sans',sans-serif;">12,680</div>
<div class="t" style="top:401.6px;font-size:12.8px;color:#151515;right:683.3px;font-family:'Liberation Sans',sans-serif;">16,110</div>
<div class="t" style="top:401.6px;font-size:12.8px;color:#151515;right:603.8px;font-family:'Liberation Sans',sans-serif;">-</div>
<div class="t" style="top:401.6px;font-size:12.8px;color:#151515;right:511.3px;font-family:'Liberation Sans',sans-serif;">12,670</div>
<div class="t" style="top:401.6px;font-size:12.8px;color:#151515;right:425.3px;font-family:'Liberation Sans',sans-serif;">11,475</div>
<div class="t" style="top:401.6px;font-size:12.8px;color:#151515;right:339.3px;font-family:'Liberation Sans',sans-serif;">14,017</div>
<div class="t" style="top:401.6px;font-size:12.8px;color:#151515;right:253.3px;font-family:'Liberation Sans',sans-serif;">12,379</div>
<div class="t" style="top:401.6px;font-size:12.8px;color:#151515;right:167.3px;font-family:'Liberation Sans',sans-serif;">3,557</div>
<div class="t" style="top:401.6px;font-size:12.8px;color:#151515;right:81.3px;font-family:'Liberation Sans',sans-serif;">12,997</div>
<div class="t" style="top:401.6px;font-size:12.8px;color:#151515;right:-4.7px;font-family:'Liberation Sans',sans-serif;">2,249</div>
<div class="t" style="top:424.6px;font-size:12.8px;color:#151515;right:981.3px;font-family:'Liberation Sans',sans-serif;font-weight:bold;">29,025,385</div>
<div class="t" style="top:424.6px;font-size:12.8px;color:#151515;right:882.3px;font-family:'Liberation Sans',sans-serif;font-weight:bold;">4,886,098</div>
<div class="t" style="top:424.6px;font-size:12.8px;color:#151515;right:784.3px;font-family:'Liberation Sans',sans-serif;font-weight:bold;">2,240,717</div>
<div class="t" style="top:424.6px;font-size:12.8px;color:#151515;right:683.3px;font-family:'Liberation Sans',sans-serif;font-weight:bold;">2,901,674</div>
<div class="t" style="top:424.6px;font-size:12.8px;color:#151515;right:597.3px;font-family:'Liberation Sans',sans-serif;font-weight:bold;">937,368</div>
<div class="t" style="top:424.6px;font-size:12.8px;color:#151515;right:511.3px;font-family:'Liberation Sans',sans-serif;font-weight:bold;">2,096,179</div>
<div class="t" style="top:424.6px;font-size:12.8px;color:#151515;right:425.3px;font-family:'Liberation Sans',sans-serif;font-weight:bold;">2,034,533</div>
<div class="t" style="top:424.6px;font-size:12.8px;color:#151515;right:339.3px;font-family:'Liberation Sans',sans-serif;font-weight:bold;">2,563,396</div>
<div class="t" style="top:424.6px;font-size:12.8px;color:#151515;right:253.3px;font-family:'Liberation Sans',sans-serif;font-weight:bold;">2,023,232</div>
<div class="t" style="top:424.6px;font-size:12.8px;color:#151515;right:167.3px;font-family:'Liberation Sans',sans-serif;font-weight:bold;">441,321</div>
<div class="t" style="top:424.6px;font-size:12.8px;color:#151515;right:81.3px;font-family:'Liberation Sans',sans-serif;font-weight:bold;">2,283,773</div>
<div class="t" style="top:424.6px;font-size:12.8px;color:#151515;right:-4.7px;font-family:'Liberation Sans',sans-serif;font-weight:bold;">342,768</div>
<div class="t" style="top:447.6px;font-size:12.8px;color:#151515;right:981.3px;font-family:'Liberation Sans',sans-serif;">219,132</div>
<div class="t" style="top:447.6px;font-size:12.8px;color:#151515;right:882.3px;font-family:'Liberation Sans',sans-serif;">5,902</div>
<div class="t" style="top:447.6px;font-size:12.8px;color:#151515;right:784.3px;font-family:'Liberation Sans',sans-serif;">19,020</div>
<div class="t" style="top:447.6px;font-size:12.8px;color:#151515;right:683.3px;font-family:'Liberation Sans',sans-serif;">24,165</div>
<div class="t" style="top:447.6px;font-size:12.8px;color:#151515;right:597.3px;font-family:'Liberation Sans',sans-serif;">9,637</div>
<div class="t" style="top:447.6px;font-size:12.8px;color:#151515;right:511.3px;font-family:'Liberation Sans',sans-serif;">19,004</div>
<div class="t" style="top:447.6px;font-size:12.8px;color:#151515;right:425.3px;font-family:'Liberation Sans',sans-serif;">17,213</div>
<div class="t" style="top:447.6px;font-size:12.8px;color:#151515;right:339.3px;font-family:'Liberation Sans',sans-serif;">21,025</div>
<div class="t" style="top:447.6px;font-size:12.8px;color:#151515;right:253.3px;font-family:'Liberation Sans',sans-serif;">18,568</div>
<div class="t" style="top:447.6px;font-size:12.8px;color:#151515;right:167.3px;font-family:'Liberation Sans',sans-serif;">5,336</div>
<div class="t" style="top:447.6px;font-size:12.8px;color:#151515;right:81.3px;font-family:'Liberation Sans',sans-serif;">19,495</div>
<div class="t" style="top:447.6px;font-size:12.8px;color:#151515;right:-4.7px;font-family:'Liberation Sans',sans-serif;">3,374</div>
<div class="t" style="top:469.4px;font-size:12.8px;color:#151515;right:981.3px;font-family:'Liberation Sans',sans-serif;">67,077</div>
<div class="t" style="top:469.4px;font-size:12.8px;color:#151515;right:882.3px;font-family:'Liberation Sans',sans-serif;">8,794</div>
<div class="t" style="top:469.4px;font-size:12.8px;color:#151515;right:790.8px;font-family:'Liberation Sans',sans-serif;">-</div>
<div class="t" style="top:469.4px;font-size:12.8px;color:#151515;right:683.3px;font-family:'Liberation Sans',sans-serif;">476</div>
<div class="t" style="top:469.4px;font-size:12.8px;color:#151515;right:597.3px;font-family:'Liberation Sans',sans-serif;">2,210</div>
<div class="t" style="top:469.4px;font-size:12.8px;color:#151515;right:511.3px;font-family:'Liberation Sans',sans-serif;">1,881</div>
<div class="t" style="top:469.4px;font-size:12.8px;color:#151515;right:425.3px;font-family:'Liberation Sans',sans-serif;">2,400</div>
<div class="t" style="top:469.4px;font-size:12.8px;color:#151515;right:339.3px;font-family:'Liberation Sans',sans-serif;">15,770</div>
<div class="t" style="top:469.4px;font-size:12.8px;color:#151515;right:253.3px;font-family:'Liberation Sans',sans-serif;">8,794</div>
<div class="t" style="top:469.4px;font-size:12.8px;color:#151515;right:173.8px;font-family:'Liberation Sans',sans-serif;">-</div>
<div class="t" style="top:469.4px;font-size:12.8px;color:#151515;right:81.3px;font-family:'Liberation Sans',sans-serif;">476</div>
<div class="t" style="top:469.4px;font-size:12.8px;color:#151515;right:-4.7px;font-family:'Liberation Sans',sans-serif;">2,210</div>
<div class="a" style="left:1345px;top:18px;width:1px;height:460px;background:#a8a8a8;"></div>
<div class="a" style="left:264px;top:473px;width:1082px;height:1px;background:#b4b4b4;"></div>
</div>
<div class="a" style="left:42.3px;top:249.5px;width:1179.7px;height:77.3px;border:3.5px solid #e00606;box-shadow:3px 3px 2.5px rgba(0,0,0,.72), inset 3px 3px 2.5px rgba(0,0,0,.66)"></div>
<div class="a" style="left:42.3px;top:249.5px;width:231.4px;height:453.5px;border:3.5px solid #e00606;box-shadow:3px 3px 2.5px rgba(0,0,0,.72), inset 3px 3px 2.5px rgba(0,0,0,.66)"></div>
<div class="a" style="left:1356px;top:230px;width:18px;height:476px;background:#fff;"></div>
<div class="a" style="left:1358px;top:232px;width:14px;height:470px;background:#f0f0f0;"></div>
<div class="a" style="left:1358px;top:232px;width:14px;height:13.5px;background:#fff;border:1px solid #ababab"></div>
<svg style="left:1361px;top:236px" width="8" height="5" viewBox="0 0 8 5"><path d="M0 5H8L4 0Z" fill="#555"/></svg>
<div class="a" style="left:1358px;top:246.5px;width:14px;height:163px;background:#fff;border:1px solid #ababab"></div>
<div class="a" style="left:1358px;top:690px;width:14px;height:14px;background:#fff;border:1px solid #ababab"></div>
<svg style="left:1361px;top:695px" width="8" height="5" viewBox="0 0 8 5"><path d="M0 0H8L4 5Z" fill="#555"/></svg>
<div class="a" style="left:10px;top:704px;width:1364px;height:28px;background:#f1f1f1;"></div>
<div class="a" style="left:10px;top:730px;width:1364px;height:2px;background:#fff;"></div>
<svg style="left:38px;top:713px" width="5" height="8" viewBox="0 0 5 8"><path d="M5 0V8L0 4Z" fill="#c4c4c4"/></svg>
<svg style="left:66px;top:713px" width="5" height="8" viewBox="0 0 5 8"><path d="M0 0V8L5 4Z" fill="#c4c4c4"/></svg>
<div class="a" style="left:110.5px;top:706px;width:102px;height:23px;background:linear-gradient(180deg,#ffffff 0%,#f7dcdc 35%,#e58f8f 100%);border-left:1px solid #9a9a9a;border-right:1px solid #9a9a9a;border-bottom:2px solid #1e6b41"></div>
<div class="t c" style="left:161.5px;top:709.9px;font-size:13.2px;color:#4b6b4f;">集团管理报表</div>
<div class="a" style="left:215px;top:707px;width:119px;height:21px;background:#0bdc0b;"></div>
<div class="t c" style="left:274.5px;top:709.9px;font-size:13.2px;color:#103a10;letter-spacing:0.4px;">集团管理报表-01</div>
<div class="a" style="left:339px;top:707px;width:119px;height:21px;background:#0b5cab;"></div>
<div class="t c" style="left:398.5px;top:709.9px;font-size:13.2px;color:#fff;letter-spacing:0.4px;">集团管理报表-02</div>
<div class="a" style="left:462px;top:707px;width:119px;height:21px;background:#f8f410;"></div>
<div class="t c" style="left:521.5px;top:709.9px;font-size:13.2px;color:#3a3a10;letter-spacing:0.4px;">集团管理报表-03</div>
<div class="a" style="left:583px;top:708px;width:1px;height:19px;background:#ababab;"></div>
<svg style="left:617px;top:709px" width="16" height="16" viewBox="0 0 16 16"><circle cx="8" cy="8" r="7" fill="none" stroke="#666" stroke-width="1.2"/><path d="M8 4V12M4 8H12" stroke="#555" stroke-width="1.6"/></svg>
<div class="a" style="left:829px;top:712px;width:1.5px;height:1.5px;background:#888;"></div>
<div class="a" style="left:829px;top:716px;width:1.5px;height:1.5px;background:#888;"></div>
<div class="a" style="left:829px;top:720px;width:1.5px;height:1.5px;background:#888;"></div>
<div class="a" style="left:845px;top:709.5px;width:510px;height:15.5px;background:#e0e0e0;"></div>
<div class="a" style="left:845.5px;top:710px;width:15px;height:14.5px;background:#fff;border:1px solid #ababab"></div>
<svg style="left:850px;top:713px" width="5" height="8" viewBox="0 0 5 8"><path d="M5 0V8L0 4Z" fill="#444"/></svg>
<div class="a" style="left:860.5px;top:710px;width:16px;height:14.5px;background:#fff;border:1px solid #ababab"></div>
<div class="a" style="left:1340.5px;top:710px;width:14.5px;height:14.5px;background:#fff;border:1px solid #ababab"></div>
<svg style="left:1346px;top:713px" width="5" height="8" viewBox="0 0 5 8"><path d="M0 0V8L5 4Z" fill="#444"/></svg>
<div class="a" style="left:10px;top:732px;width:1364px;height:17px;background:#0c5a2e;"></div>
<div class="t" style="left:17px;top:735.5px;font-size:12px;color:#fff;">就绪</div>
<svg style="left:62px;top:736px" width="13" height="12" viewBox="0 0 13 12"><rect x="0" y="0" width="6" height="5" fill="#fff"/><rect x="2.5" y="3.5" width="10" height="8" fill="#0c5a2e" stroke="#fff" stroke-width="1.2"/><path d="M4.5 7H6M7.5 7H9M10 7H11.5M4.5 9.5H6M7.5 9.5H9M10 9.5H11.5" stroke="#fff" stroke-width="1.2"/></svg>
<div class="t" style="left:1015px;top:735.5px;font-size:12px;color:#fff;">计数: 63</div>
<div class="a" style="left:1079px;top:732px;width:37px;height:17px;background:#0a4a26;"></div>
<svg style="left:1091.5px;top:736px" width="13" height="12" viewBox="0 0 13 12"><rect x="0.5" y="0.5" width="12" height="11" fill="none" stroke="#fff"/><path d="M4.5 0V12M8.5 0V12M0 4.2H13M0 7.8H13" stroke="#fff"/></svg>
<svg style="left:1129px;top:736px" width="14" height="12" viewBox="0 0 14 12"><rect x="0.5" y="0.5" width="13" height="11" fill="none" stroke="#fff"/><rect x="3.5" y="2.5" width="7" height="7" fill="none" stroke="#fff"/><path d="M5 5H9M5 7H9" stroke="#fff"/></svg>
<svg style="left:1167px;top:736px" width="14" height="12" viewBox="0 0 14 12"><rect x="0.5" y="0.5" width="13" height="11" fill="none" stroke="#fff"/><rect x="2" y="1" width="4" height="5.5" fill="#fff"/><rect x="7.5" y="1" width="4.5" height="5.5" fill="#fff"/></svg>
<div class="a" style="left:1198px;top:741.5px;width:6px;height:2px;background:#fff;"></div>
<div class="a" style="left:1208px;top:742px;width:100px;height:1px;background:#fff;"></div>
<div class="a" style="left:1258.5px;top:737px;width:4.5px;height:11px;background:#fff;"></div>
<div class="a" style="left:1311.5px;top:741.5px;width:9px;height:2px;background:#fff;"></div>
<div class="a" style="left:1315px;top:738px;width:2px;height:9px;background:#fff;"></div>
<div class="t" style="left:1335px;top:735.5px;font-size:12px;color:#fff;">115%</div>
<div class="t" style="left:483px;top:767.8px;font-size:23px;color:#f4f4f4;letter-spacing:0.82px;">比如大家看到<span style="display:inline-block;width:13px"></span><span style="letter-spacing:1.15px">这个标题行和这个标题列</span></div>
</body></html>
